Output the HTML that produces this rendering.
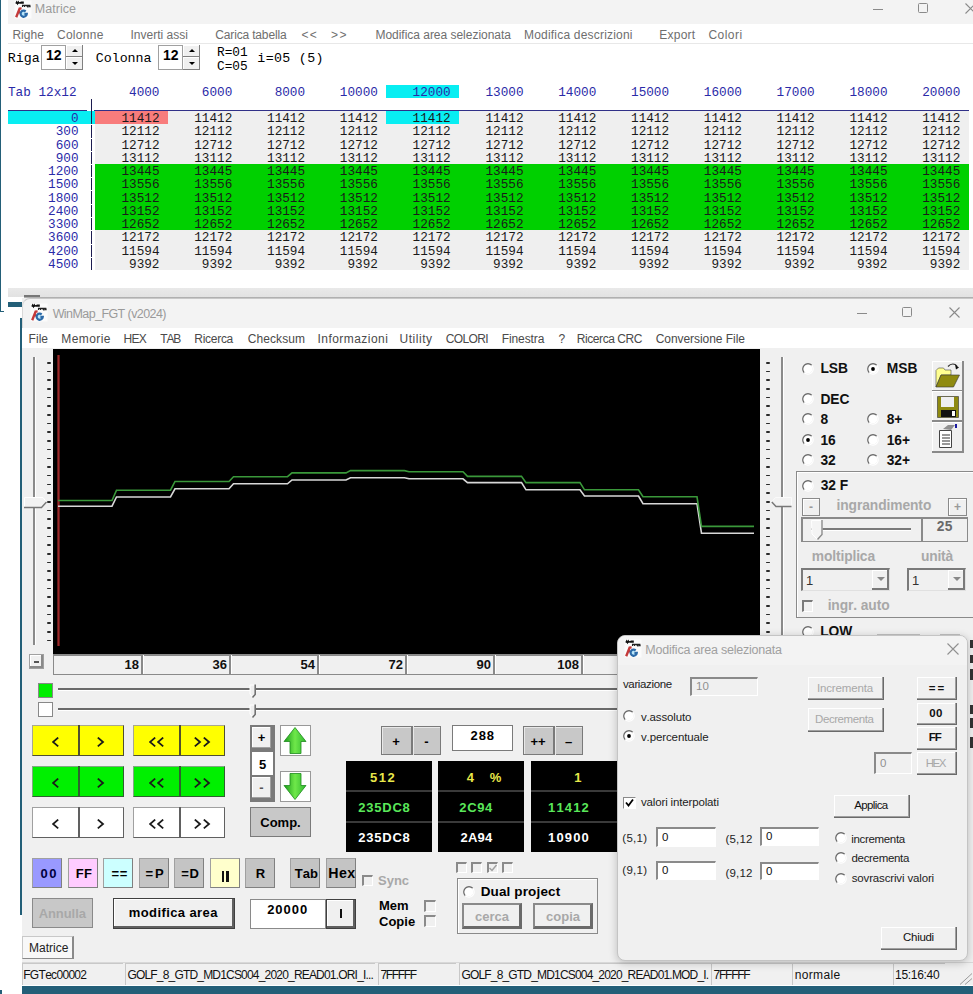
<!DOCTYPE html><html><head><meta charset="utf-8"><style>
html,body{margin:0;padding:0;}
body{width:973px;height:994px;position:relative;overflow:hidden;background:#fff;font-family:"Liberation Sans",sans-serif;}
body div{position:absolute;box-sizing:border-box;}
</style></head><body>
<div style="left:0px;top:0px;width:1px;height:312px;background:#235f78"></div>
<div style="left:0px;top:311px;width:4px;height:1px;background:#235f78"></div>
<div style="left:8px;top:0px;width:965px;height:24px;background:#f3f3f3"></div>
<svg style="position:absolute;left:10px;top:-3.4px" width="22" height="22" viewBox="0 0 22 22">
<rect x="4.5" y="3.5" width="17" height="18" fill="#fbfbfb"/>
<path d="M6 6.6L6.7 5.2L7.5 6.6L8.3 5.2L9 6.6M10.2 5V6.8M11.4 6.8V5.3H13V6.8" stroke="#111" stroke-width="1.6" fill="none"/>
<path d="M12.6 10V8.4H14.6V10M15.2 8.4H17.2V10M17.8 10.6V8.4H19.8L20 9.6H18.6" stroke="#222" stroke-width="1.3" fill="none"/>
<path d="M6.2 20.2L9.6 11.6L11.6 11.4M7.6 15.4H10.2" stroke="#c43a3a" stroke-width="2.4" fill="none"/>
<path d="M15.7 14.3A3.1 3.1 0 1 0 16.8 16.9H14.4" fill="#b8e6fa" stroke="#2c6aa8" stroke-width="2.2"/>
</svg>
<div style="left:34.77px;top:1.07px;font-family:'Liberation Sans', sans-serif;font-size:12.5px;line-height:16px;font-weight:normal;color:#9a9a9a;white-space:pre;font-kerning:none;letter-spacing:0.050px;">Matrice</div>
<div style="left:873px;top:8.5px;width:10px;height:1px;background:#8a8a8a"></div>
<div style="left:918px;top:3.0px;width:10px;height:10px;border:1px solid #8a8a8a;border-radius:1.5px"></div>
<svg style="position:absolute;left:965px;top:3.0px" width="11" height="11"><path d="M0.5 0.5L10.5 10.5M10.5 0.5L0.5 10.5" stroke="#8a8a8a" stroke-width="1.1"/></svg>
<div style="left:8px;top:24px;width:965px;height:20px;background:#fff"></div>
<div style="left:8px;top:43px;width:965px;height:1px;background:#e8e8e8"></div>
<div style="left:12.42px;top:26.54px;font-family:'Liberation Sans', sans-serif;font-size:12px;line-height:16px;font-weight:normal;color:#6e6e6e;white-space:pre;font-kerning:none;letter-spacing:0.041px;">Righe</div>
<div style="left:56.99px;top:26.54px;font-family:'Liberation Sans', sans-serif;font-size:12px;line-height:16px;font-weight:normal;color:#6e6e6e;white-space:pre;font-kerning:none;letter-spacing:0.274px;">Colonne</div>
<div style="left:130.49px;top:26.54px;font-family:'Liberation Sans', sans-serif;font-size:12px;line-height:16px;font-weight:normal;color:#6e6e6e;white-space:pre;font-kerning:none;letter-spacing:0.006px;">Inverti assi</div>
<div style="left:215.29px;top:26.54px;font-family:'Liberation Sans', sans-serif;font-size:12px;line-height:16px;font-weight:normal;color:#6e6e6e;white-space:pre;font-kerning:none;letter-spacing:-0.159px;">Carica tabella</div>
<div style="left:301.41px;top:26.54px;font-family:'Liberation Sans', sans-serif;font-size:12px;line-height:16px;font-weight:normal;color:#6e6e6e;white-space:pre;font-kerning:none;letter-spacing:1.262px;">&lt;&lt;</div>
<div style="left:330.91px;top:26.54px;font-family:'Liberation Sans', sans-serif;font-size:12px;line-height:16px;font-weight:normal;color:#6e6e6e;white-space:pre;font-kerning:none;letter-spacing:1.662px;">&gt;&gt;</div>
<div style="left:375.42px;top:26.54px;font-family:'Liberation Sans', sans-serif;font-size:12px;line-height:16px;font-weight:normal;color:#6e6e6e;white-space:pre;font-kerning:none;letter-spacing:-0.021px;">Modifica area selezionata</div>
<div style="left:524.02px;top:26.54px;font-family:'Liberation Sans', sans-serif;font-size:12px;line-height:16px;font-weight:normal;color:#6e6e6e;white-space:pre;font-kerning:none;letter-spacing:0.199px;">Modifica descrizioni</div>
<div style="left:659.32px;top:26.54px;font-family:'Liberation Sans', sans-serif;font-size:12px;line-height:16px;font-weight:normal;color:#6e6e6e;white-space:pre;font-kerning:none;letter-spacing:0.218px;">Export</div>
<div style="left:708.39px;top:26.54px;font-family:'Liberation Sans', sans-serif;font-size:12px;line-height:16px;font-weight:normal;color:#6e6e6e;white-space:pre;font-kerning:none;letter-spacing:0.495px;">Colori</div>
<div style="left:8px;top:44px;width:965px;height:244px;background:#fff"></div>
<div style="left:7.70px;top:49.96px;font-family:'Liberation Mono', monospace;font-size:13.3px;line-height:17px;font-weight:normal;color:#000;white-space:pre;font-kerning:none;">Riga</div>
<div style="left:41px;top:45px;width:25px;height:25px;background:#fff;border:1px solid #a0a0a0;box-sizing:border-box"></div>
<div style="left:46.00px;top:45.65px;font-family:'Liberation Sans', sans-serif;font-size:14px;line-height:18px;font-weight:bold;color:#000;white-space:pre;font-kerning:none;">12</div>
<div style="left:66px;top:45px;width:17px;height:12px;background:#f0f0f0;box-shadow:inset -1px -1px #808080, inset 1px 1px #fff"></div>
<div style="left:66px;top:57px;width:17px;height:13px;background:#f0f0f0;box-shadow:inset -1px -1px #808080, inset 1px 1px #fff"></div>
<div style="left:72px;top:49px;width:0;height:0;border-left:3px solid transparent;border-right:3px solid transparent;border-bottom:3px solid #000"></div>
<div style="left:72px;top:62px;width:0;height:0;border-left:3px solid transparent;border-right:3px solid transparent;border-top:3px solid #000"></div>
<div style="left:95.70px;top:49.96px;font-family:'Liberation Mono', monospace;font-size:13.3px;line-height:17px;font-weight:normal;color:#000;white-space:pre;font-kerning:none;">Colonna</div>
<div style="left:158px;top:45px;width:25px;height:25px;background:#fff;border:1px solid #a0a0a0;box-sizing:border-box"></div>
<div style="left:163.00px;top:45.65px;font-family:'Liberation Sans', sans-serif;font-size:14px;line-height:18px;font-weight:bold;color:#000;white-space:pre;font-kerning:none;">12</div>
<div style="left:183px;top:45px;width:17px;height:12px;background:#f0f0f0;box-shadow:inset -1px -1px #808080, inset 1px 1px #fff"></div>
<div style="left:183px;top:57px;width:17px;height:13px;background:#f0f0f0;box-shadow:inset -1px -1px #808080, inset 1px 1px #fff"></div>
<div style="left:189px;top:49px;width:0;height:0;border-left:3px solid transparent;border-right:3px solid transparent;border-bottom:3px solid #000"></div>
<div style="left:189px;top:62px;width:0;height:0;border-left:3px solid transparent;border-right:3px solid transparent;border-top:3px solid #000"></div>
<div style="left:217.00px;top:44.09px;font-family:'Liberation Mono', monospace;font-size:12.8px;line-height:17px;font-weight:normal;color:#000;white-space:pre;font-kerning:none;">R=01</div>
<div style="left:217.00px;top:57.59px;font-family:'Liberation Mono', monospace;font-size:12.8px;line-height:17px;font-weight:normal;color:#000;white-space:pre;font-kerning:none;">C=05</div>
<div style="left:257.37px;top:50.46px;font-family:'Liberation Mono', monospace;font-size:13.3px;line-height:17px;font-weight:normal;color:#000;white-space:pre;font-kerning:none;letter-spacing:0.316px;">i=05 (5)</div>
<div style="left:8.00px;top:83.92px;font-family:'Liberation Mono', monospace;font-size:12.7px;line-height:17px;font-weight:normal;color:#2a2aa8;white-space:pre;font-kerning:none;">Tab 12x12</div>
<div style="left:386px;top:85px;width:73px;height:13px;background:#08eef2"></div>
<div style="left:89.50px;top:83.92px;width:70px;text-align:right;font-family:'Liberation Mono', monospace;font-size:12.7px;line-height:17px;font-weight:normal;color:#2a2aa8;white-space:pre;font-kerning:none;">4000</div>
<div style="left:162.30px;top:83.92px;width:70px;text-align:right;font-family:'Liberation Mono', monospace;font-size:12.7px;line-height:17px;font-weight:normal;color:#2a2aa8;white-space:pre;font-kerning:none;">6000</div>
<div style="left:235.10px;top:83.92px;width:70px;text-align:right;font-family:'Liberation Mono', monospace;font-size:12.7px;line-height:17px;font-weight:normal;color:#2a2aa8;white-space:pre;font-kerning:none;">8000</div>
<div style="left:307.90px;top:83.92px;width:70px;text-align:right;font-family:'Liberation Mono', monospace;font-size:12.7px;line-height:17px;font-weight:normal;color:#2a2aa8;white-space:pre;font-kerning:none;">10000</div>
<div style="left:380.70px;top:83.92px;width:70px;text-align:right;font-family:'Liberation Mono', monospace;font-size:12.7px;line-height:17px;font-weight:normal;color:#2a2aa8;white-space:pre;font-kerning:none;">12000</div>
<div style="left:453.50px;top:83.92px;width:70px;text-align:right;font-family:'Liberation Mono', monospace;font-size:12.7px;line-height:17px;font-weight:normal;color:#2a2aa8;white-space:pre;font-kerning:none;">13000</div>
<div style="left:526.30px;top:83.92px;width:70px;text-align:right;font-family:'Liberation Mono', monospace;font-size:12.7px;line-height:17px;font-weight:normal;color:#2a2aa8;white-space:pre;font-kerning:none;">14000</div>
<div style="left:599.10px;top:83.92px;width:70px;text-align:right;font-family:'Liberation Mono', monospace;font-size:12.7px;line-height:17px;font-weight:normal;color:#2a2aa8;white-space:pre;font-kerning:none;">15000</div>
<div style="left:671.90px;top:83.92px;width:70px;text-align:right;font-family:'Liberation Mono', monospace;font-size:12.7px;line-height:17px;font-weight:normal;color:#2a2aa8;white-space:pre;font-kerning:none;">16000</div>
<div style="left:744.70px;top:83.92px;width:70px;text-align:right;font-family:'Liberation Mono', monospace;font-size:12.7px;line-height:17px;font-weight:normal;color:#2a2aa8;white-space:pre;font-kerning:none;">17000</div>
<div style="left:817.50px;top:83.92px;width:70px;text-align:right;font-family:'Liberation Mono', monospace;font-size:12.7px;line-height:17px;font-weight:normal;color:#2a2aa8;white-space:pre;font-kerning:none;">18000</div>
<div style="left:890.30px;top:83.92px;width:70px;text-align:right;font-family:'Liberation Mono', monospace;font-size:12.7px;line-height:17px;font-weight:normal;color:#2a2aa8;white-space:pre;font-kerning:none;">20000</div>
<div style="left:8px;top:110px;width:79px;height:1px;background:#303088"></div>
<div style="left:94px;top:110px;width:875px;height:1px;background:#303088"></div>
<div style="left:95px;top:111px;width:874px;height:159px;background:#efefef"></div>
<div style="left:8px;top:111px;width:87px;height:13px;background:#08eef2"></div>
<div style="left:95px;top:111px;width:73px;height:13px;background:#f87c7c"></div>
<div style="left:386px;top:111px;width:73px;height:13px;background:#08eef2"></div>
<div style="left:95px;top:164px;width:874px;height:66px;background:#00d000"></div>
<div style="left:91px;top:99px;width:1px;height:25px;background:#1c1c50"></div>
<div style="left:91px;top:125px;width:1px;height:13px;background:#1c1c50"></div>
<div style="left:91px;top:139px;width:1px;height:12px;background:#1c1c50"></div>
<div style="left:91px;top:152px;width:1px;height:12px;background:#1c1c50"></div>
<div style="left:91px;top:165px;width:1px;height:12px;background:#1c1c50"></div>
<div style="left:91px;top:178px;width:1px;height:12px;background:#1c1c50"></div>
<div style="left:91px;top:191px;width:1px;height:13px;background:#1c1c50"></div>
<div style="left:91px;top:205px;width:1px;height:12px;background:#1c1c50"></div>
<div style="left:91px;top:218px;width:1px;height:12px;background:#1c1c50"></div>
<div style="left:91px;top:231px;width:1px;height:13px;background:#1c1c50"></div>
<div style="left:91px;top:245px;width:1px;height:12px;background:#1c1c50"></div>
<div style="left:91px;top:258px;width:1px;height:12px;background:#1c1c50"></div>
<div style="left:8.50px;top:110.02px;width:70px;text-align:right;font-family:'Liberation Mono', monospace;font-size:12.7px;line-height:17px;font-weight:normal;color:#2a2aa8;white-space:pre;font-kerning:none;">0</div>
<div style="left:89.50px;top:110.02px;width:70px;text-align:right;font-family:'Liberation Mono', monospace;font-size:12.7px;line-height:17px;font-weight:normal;color:#1a1a1a;white-space:pre;font-kerning:none;">11412</div>
<div style="left:162.30px;top:110.02px;width:70px;text-align:right;font-family:'Liberation Mono', monospace;font-size:12.7px;line-height:17px;font-weight:normal;color:#1a1a1a;white-space:pre;font-kerning:none;">11412</div>
<div style="left:235.10px;top:110.02px;width:70px;text-align:right;font-family:'Liberation Mono', monospace;font-size:12.7px;line-height:17px;font-weight:normal;color:#1a1a1a;white-space:pre;font-kerning:none;">11412</div>
<div style="left:307.90px;top:110.02px;width:70px;text-align:right;font-family:'Liberation Mono', monospace;font-size:12.7px;line-height:17px;font-weight:normal;color:#1a1a1a;white-space:pre;font-kerning:none;">11412</div>
<div style="left:380.70px;top:110.02px;width:70px;text-align:right;font-family:'Liberation Mono', monospace;font-size:12.7px;line-height:17px;font-weight:normal;color:#1a1a1a;white-space:pre;font-kerning:none;">11412</div>
<div style="left:453.50px;top:110.02px;width:70px;text-align:right;font-family:'Liberation Mono', monospace;font-size:12.7px;line-height:17px;font-weight:normal;color:#1a1a1a;white-space:pre;font-kerning:none;">11412</div>
<div style="left:526.30px;top:110.02px;width:70px;text-align:right;font-family:'Liberation Mono', monospace;font-size:12.7px;line-height:17px;font-weight:normal;color:#1a1a1a;white-space:pre;font-kerning:none;">11412</div>
<div style="left:599.10px;top:110.02px;width:70px;text-align:right;font-family:'Liberation Mono', monospace;font-size:12.7px;line-height:17px;font-weight:normal;color:#1a1a1a;white-space:pre;font-kerning:none;">11412</div>
<div style="left:671.90px;top:110.02px;width:70px;text-align:right;font-family:'Liberation Mono', monospace;font-size:12.7px;line-height:17px;font-weight:normal;color:#1a1a1a;white-space:pre;font-kerning:none;">11412</div>
<div style="left:744.70px;top:110.02px;width:70px;text-align:right;font-family:'Liberation Mono', monospace;font-size:12.7px;line-height:17px;font-weight:normal;color:#1a1a1a;white-space:pre;font-kerning:none;">11412</div>
<div style="left:817.50px;top:110.02px;width:70px;text-align:right;font-family:'Liberation Mono', monospace;font-size:12.7px;line-height:17px;font-weight:normal;color:#1a1a1a;white-space:pre;font-kerning:none;">11412</div>
<div style="left:890.30px;top:110.02px;width:70px;text-align:right;font-family:'Liberation Mono', monospace;font-size:12.7px;line-height:17px;font-weight:normal;color:#1a1a1a;white-space:pre;font-kerning:none;">11412</div>
<div style="left:8.50px;top:123.27px;width:70px;text-align:right;font-family:'Liberation Mono', monospace;font-size:12.7px;line-height:17px;font-weight:normal;color:#2a2aa8;white-space:pre;font-kerning:none;">300</div>
<div style="left:89.50px;top:123.27px;width:70px;text-align:right;font-family:'Liberation Mono', monospace;font-size:12.7px;line-height:17px;font-weight:normal;color:#1a1a1a;white-space:pre;font-kerning:none;">12112</div>
<div style="left:162.30px;top:123.27px;width:70px;text-align:right;font-family:'Liberation Mono', monospace;font-size:12.7px;line-height:17px;font-weight:normal;color:#1a1a1a;white-space:pre;font-kerning:none;">12112</div>
<div style="left:235.10px;top:123.27px;width:70px;text-align:right;font-family:'Liberation Mono', monospace;font-size:12.7px;line-height:17px;font-weight:normal;color:#1a1a1a;white-space:pre;font-kerning:none;">12112</div>
<div style="left:307.90px;top:123.27px;width:70px;text-align:right;font-family:'Liberation Mono', monospace;font-size:12.7px;line-height:17px;font-weight:normal;color:#1a1a1a;white-space:pre;font-kerning:none;">12112</div>
<div style="left:380.70px;top:123.27px;width:70px;text-align:right;font-family:'Liberation Mono', monospace;font-size:12.7px;line-height:17px;font-weight:normal;color:#1a1a1a;white-space:pre;font-kerning:none;">12112</div>
<div style="left:453.50px;top:123.27px;width:70px;text-align:right;font-family:'Liberation Mono', monospace;font-size:12.7px;line-height:17px;font-weight:normal;color:#1a1a1a;white-space:pre;font-kerning:none;">12112</div>
<div style="left:526.30px;top:123.27px;width:70px;text-align:right;font-family:'Liberation Mono', monospace;font-size:12.7px;line-height:17px;font-weight:normal;color:#1a1a1a;white-space:pre;font-kerning:none;">12112</div>
<div style="left:599.10px;top:123.27px;width:70px;text-align:right;font-family:'Liberation Mono', monospace;font-size:12.7px;line-height:17px;font-weight:normal;color:#1a1a1a;white-space:pre;font-kerning:none;">12112</div>
<div style="left:671.90px;top:123.27px;width:70px;text-align:right;font-family:'Liberation Mono', monospace;font-size:12.7px;line-height:17px;font-weight:normal;color:#1a1a1a;white-space:pre;font-kerning:none;">12112</div>
<div style="left:744.70px;top:123.27px;width:70px;text-align:right;font-family:'Liberation Mono', monospace;font-size:12.7px;line-height:17px;font-weight:normal;color:#1a1a1a;white-space:pre;font-kerning:none;">12112</div>
<div style="left:817.50px;top:123.27px;width:70px;text-align:right;font-family:'Liberation Mono', monospace;font-size:12.7px;line-height:17px;font-weight:normal;color:#1a1a1a;white-space:pre;font-kerning:none;">12112</div>
<div style="left:890.30px;top:123.27px;width:70px;text-align:right;font-family:'Liberation Mono', monospace;font-size:12.7px;line-height:17px;font-weight:normal;color:#1a1a1a;white-space:pre;font-kerning:none;">12112</div>
<div style="left:8.50px;top:136.52px;width:70px;text-align:right;font-family:'Liberation Mono', monospace;font-size:12.7px;line-height:17px;font-weight:normal;color:#2a2aa8;white-space:pre;font-kerning:none;">600</div>
<div style="left:89.50px;top:136.52px;width:70px;text-align:right;font-family:'Liberation Mono', monospace;font-size:12.7px;line-height:17px;font-weight:normal;color:#1a1a1a;white-space:pre;font-kerning:none;">12712</div>
<div style="left:162.30px;top:136.52px;width:70px;text-align:right;font-family:'Liberation Mono', monospace;font-size:12.7px;line-height:17px;font-weight:normal;color:#1a1a1a;white-space:pre;font-kerning:none;">12712</div>
<div style="left:235.10px;top:136.52px;width:70px;text-align:right;font-family:'Liberation Mono', monospace;font-size:12.7px;line-height:17px;font-weight:normal;color:#1a1a1a;white-space:pre;font-kerning:none;">12712</div>
<div style="left:307.90px;top:136.52px;width:70px;text-align:right;font-family:'Liberation Mono', monospace;font-size:12.7px;line-height:17px;font-weight:normal;color:#1a1a1a;white-space:pre;font-kerning:none;">12712</div>
<div style="left:380.70px;top:136.52px;width:70px;text-align:right;font-family:'Liberation Mono', monospace;font-size:12.7px;line-height:17px;font-weight:normal;color:#1a1a1a;white-space:pre;font-kerning:none;">12712</div>
<div style="left:453.50px;top:136.52px;width:70px;text-align:right;font-family:'Liberation Mono', monospace;font-size:12.7px;line-height:17px;font-weight:normal;color:#1a1a1a;white-space:pre;font-kerning:none;">12712</div>
<div style="left:526.30px;top:136.52px;width:70px;text-align:right;font-family:'Liberation Mono', monospace;font-size:12.7px;line-height:17px;font-weight:normal;color:#1a1a1a;white-space:pre;font-kerning:none;">12712</div>
<div style="left:599.10px;top:136.52px;width:70px;text-align:right;font-family:'Liberation Mono', monospace;font-size:12.7px;line-height:17px;font-weight:normal;color:#1a1a1a;white-space:pre;font-kerning:none;">12712</div>
<div style="left:671.90px;top:136.52px;width:70px;text-align:right;font-family:'Liberation Mono', monospace;font-size:12.7px;line-height:17px;font-weight:normal;color:#1a1a1a;white-space:pre;font-kerning:none;">12712</div>
<div style="left:744.70px;top:136.52px;width:70px;text-align:right;font-family:'Liberation Mono', monospace;font-size:12.7px;line-height:17px;font-weight:normal;color:#1a1a1a;white-space:pre;font-kerning:none;">12712</div>
<div style="left:817.50px;top:136.52px;width:70px;text-align:right;font-family:'Liberation Mono', monospace;font-size:12.7px;line-height:17px;font-weight:normal;color:#1a1a1a;white-space:pre;font-kerning:none;">12712</div>
<div style="left:890.30px;top:136.52px;width:70px;text-align:right;font-family:'Liberation Mono', monospace;font-size:12.7px;line-height:17px;font-weight:normal;color:#1a1a1a;white-space:pre;font-kerning:none;">12712</div>
<div style="left:8.50px;top:149.77px;width:70px;text-align:right;font-family:'Liberation Mono', monospace;font-size:12.7px;line-height:17px;font-weight:normal;color:#2a2aa8;white-space:pre;font-kerning:none;">900</div>
<div style="left:89.50px;top:149.77px;width:70px;text-align:right;font-family:'Liberation Mono', monospace;font-size:12.7px;line-height:17px;font-weight:normal;color:#1a1a1a;white-space:pre;font-kerning:none;">13112</div>
<div style="left:162.30px;top:149.77px;width:70px;text-align:right;font-family:'Liberation Mono', monospace;font-size:12.7px;line-height:17px;font-weight:normal;color:#1a1a1a;white-space:pre;font-kerning:none;">13112</div>
<div style="left:235.10px;top:149.77px;width:70px;text-align:right;font-family:'Liberation Mono', monospace;font-size:12.7px;line-height:17px;font-weight:normal;color:#1a1a1a;white-space:pre;font-kerning:none;">13112</div>
<div style="left:307.90px;top:149.77px;width:70px;text-align:right;font-family:'Liberation Mono', monospace;font-size:12.7px;line-height:17px;font-weight:normal;color:#1a1a1a;white-space:pre;font-kerning:none;">13112</div>
<div style="left:380.70px;top:149.77px;width:70px;text-align:right;font-family:'Liberation Mono', monospace;font-size:12.7px;line-height:17px;font-weight:normal;color:#1a1a1a;white-space:pre;font-kerning:none;">13112</div>
<div style="left:453.50px;top:149.77px;width:70px;text-align:right;font-family:'Liberation Mono', monospace;font-size:12.7px;line-height:17px;font-weight:normal;color:#1a1a1a;white-space:pre;font-kerning:none;">13112</div>
<div style="left:526.30px;top:149.77px;width:70px;text-align:right;font-family:'Liberation Mono', monospace;font-size:12.7px;line-height:17px;font-weight:normal;color:#1a1a1a;white-space:pre;font-kerning:none;">13112</div>
<div style="left:599.10px;top:149.77px;width:70px;text-align:right;font-family:'Liberation Mono', monospace;font-size:12.7px;line-height:17px;font-weight:normal;color:#1a1a1a;white-space:pre;font-kerning:none;">13112</div>
<div style="left:671.90px;top:149.77px;width:70px;text-align:right;font-family:'Liberation Mono', monospace;font-size:12.7px;line-height:17px;font-weight:normal;color:#1a1a1a;white-space:pre;font-kerning:none;">13112</div>
<div style="left:744.70px;top:149.77px;width:70px;text-align:right;font-family:'Liberation Mono', monospace;font-size:12.7px;line-height:17px;font-weight:normal;color:#1a1a1a;white-space:pre;font-kerning:none;">13112</div>
<div style="left:817.50px;top:149.77px;width:70px;text-align:right;font-family:'Liberation Mono', monospace;font-size:12.7px;line-height:17px;font-weight:normal;color:#1a1a1a;white-space:pre;font-kerning:none;">13112</div>
<div style="left:890.30px;top:149.77px;width:70px;text-align:right;font-family:'Liberation Mono', monospace;font-size:12.7px;line-height:17px;font-weight:normal;color:#1a1a1a;white-space:pre;font-kerning:none;">13112</div>
<div style="left:8.50px;top:163.02px;width:70px;text-align:right;font-family:'Liberation Mono', monospace;font-size:12.7px;line-height:17px;font-weight:normal;color:#2a2aa8;white-space:pre;font-kerning:none;">1200</div>
<div style="left:89.50px;top:163.02px;width:70px;text-align:right;font-family:'Liberation Mono', monospace;font-size:12.7px;line-height:17px;font-weight:normal;color:#1a1a1a;white-space:pre;font-kerning:none;">13445</div>
<div style="left:162.30px;top:163.02px;width:70px;text-align:right;font-family:'Liberation Mono', monospace;font-size:12.7px;line-height:17px;font-weight:normal;color:#1a1a1a;white-space:pre;font-kerning:none;">13445</div>
<div style="left:235.10px;top:163.02px;width:70px;text-align:right;font-family:'Liberation Mono', monospace;font-size:12.7px;line-height:17px;font-weight:normal;color:#1a1a1a;white-space:pre;font-kerning:none;">13445</div>
<div style="left:307.90px;top:163.02px;width:70px;text-align:right;font-family:'Liberation Mono', monospace;font-size:12.7px;line-height:17px;font-weight:normal;color:#1a1a1a;white-space:pre;font-kerning:none;">13445</div>
<div style="left:380.70px;top:163.02px;width:70px;text-align:right;font-family:'Liberation Mono', monospace;font-size:12.7px;line-height:17px;font-weight:normal;color:#1a1a1a;white-space:pre;font-kerning:none;">13445</div>
<div style="left:453.50px;top:163.02px;width:70px;text-align:right;font-family:'Liberation Mono', monospace;font-size:12.7px;line-height:17px;font-weight:normal;color:#1a1a1a;white-space:pre;font-kerning:none;">13445</div>
<div style="left:526.30px;top:163.02px;width:70px;text-align:right;font-family:'Liberation Mono', monospace;font-size:12.7px;line-height:17px;font-weight:normal;color:#1a1a1a;white-space:pre;font-kerning:none;">13445</div>
<div style="left:599.10px;top:163.02px;width:70px;text-align:right;font-family:'Liberation Mono', monospace;font-size:12.7px;line-height:17px;font-weight:normal;color:#1a1a1a;white-space:pre;font-kerning:none;">13445</div>
<div style="left:671.90px;top:163.02px;width:70px;text-align:right;font-family:'Liberation Mono', monospace;font-size:12.7px;line-height:17px;font-weight:normal;color:#1a1a1a;white-space:pre;font-kerning:none;">13445</div>
<div style="left:744.70px;top:163.02px;width:70px;text-align:right;font-family:'Liberation Mono', monospace;font-size:12.7px;line-height:17px;font-weight:normal;color:#1a1a1a;white-space:pre;font-kerning:none;">13445</div>
<div style="left:817.50px;top:163.02px;width:70px;text-align:right;font-family:'Liberation Mono', monospace;font-size:12.7px;line-height:17px;font-weight:normal;color:#1a1a1a;white-space:pre;font-kerning:none;">13445</div>
<div style="left:890.30px;top:163.02px;width:70px;text-align:right;font-family:'Liberation Mono', monospace;font-size:12.7px;line-height:17px;font-weight:normal;color:#1a1a1a;white-space:pre;font-kerning:none;">13445</div>
<div style="left:8.50px;top:176.27px;width:70px;text-align:right;font-family:'Liberation Mono', monospace;font-size:12.7px;line-height:17px;font-weight:normal;color:#2a2aa8;white-space:pre;font-kerning:none;">1500</div>
<div style="left:89.50px;top:176.27px;width:70px;text-align:right;font-family:'Liberation Mono', monospace;font-size:12.7px;line-height:17px;font-weight:normal;color:#1a1a1a;white-space:pre;font-kerning:none;">13556</div>
<div style="left:162.30px;top:176.27px;width:70px;text-align:right;font-family:'Liberation Mono', monospace;font-size:12.7px;line-height:17px;font-weight:normal;color:#1a1a1a;white-space:pre;font-kerning:none;">13556</div>
<div style="left:235.10px;top:176.27px;width:70px;text-align:right;font-family:'Liberation Mono', monospace;font-size:12.7px;line-height:17px;font-weight:normal;color:#1a1a1a;white-space:pre;font-kerning:none;">13556</div>
<div style="left:307.90px;top:176.27px;width:70px;text-align:right;font-family:'Liberation Mono', monospace;font-size:12.7px;line-height:17px;font-weight:normal;color:#1a1a1a;white-space:pre;font-kerning:none;">13556</div>
<div style="left:380.70px;top:176.27px;width:70px;text-align:right;font-family:'Liberation Mono', monospace;font-size:12.7px;line-height:17px;font-weight:normal;color:#1a1a1a;white-space:pre;font-kerning:none;">13556</div>
<div style="left:453.50px;top:176.27px;width:70px;text-align:right;font-family:'Liberation Mono', monospace;font-size:12.7px;line-height:17px;font-weight:normal;color:#1a1a1a;white-space:pre;font-kerning:none;">13556</div>
<div style="left:526.30px;top:176.27px;width:70px;text-align:right;font-family:'Liberation Mono', monospace;font-size:12.7px;line-height:17px;font-weight:normal;color:#1a1a1a;white-space:pre;font-kerning:none;">13556</div>
<div style="left:599.10px;top:176.27px;width:70px;text-align:right;font-family:'Liberation Mono', monospace;font-size:12.7px;line-height:17px;font-weight:normal;color:#1a1a1a;white-space:pre;font-kerning:none;">13556</div>
<div style="left:671.90px;top:176.27px;width:70px;text-align:right;font-family:'Liberation Mono', monospace;font-size:12.7px;line-height:17px;font-weight:normal;color:#1a1a1a;white-space:pre;font-kerning:none;">13556</div>
<div style="left:744.70px;top:176.27px;width:70px;text-align:right;font-family:'Liberation Mono', monospace;font-size:12.7px;line-height:17px;font-weight:normal;color:#1a1a1a;white-space:pre;font-kerning:none;">13556</div>
<div style="left:817.50px;top:176.27px;width:70px;text-align:right;font-family:'Liberation Mono', monospace;font-size:12.7px;line-height:17px;font-weight:normal;color:#1a1a1a;white-space:pre;font-kerning:none;">13556</div>
<div style="left:890.30px;top:176.27px;width:70px;text-align:right;font-family:'Liberation Mono', monospace;font-size:12.7px;line-height:17px;font-weight:normal;color:#1a1a1a;white-space:pre;font-kerning:none;">13556</div>
<div style="left:8.50px;top:189.52px;width:70px;text-align:right;font-family:'Liberation Mono', monospace;font-size:12.7px;line-height:17px;font-weight:normal;color:#2a2aa8;white-space:pre;font-kerning:none;">1800</div>
<div style="left:89.50px;top:189.52px;width:70px;text-align:right;font-family:'Liberation Mono', monospace;font-size:12.7px;line-height:17px;font-weight:normal;color:#1a1a1a;white-space:pre;font-kerning:none;">13512</div>
<div style="left:162.30px;top:189.52px;width:70px;text-align:right;font-family:'Liberation Mono', monospace;font-size:12.7px;line-height:17px;font-weight:normal;color:#1a1a1a;white-space:pre;font-kerning:none;">13512</div>
<div style="left:235.10px;top:189.52px;width:70px;text-align:right;font-family:'Liberation Mono', monospace;font-size:12.7px;line-height:17px;font-weight:normal;color:#1a1a1a;white-space:pre;font-kerning:none;">13512</div>
<div style="left:307.90px;top:189.52px;width:70px;text-align:right;font-family:'Liberation Mono', monospace;font-size:12.7px;line-height:17px;font-weight:normal;color:#1a1a1a;white-space:pre;font-kerning:none;">13512</div>
<div style="left:380.70px;top:189.52px;width:70px;text-align:right;font-family:'Liberation Mono', monospace;font-size:12.7px;line-height:17px;font-weight:normal;color:#1a1a1a;white-space:pre;font-kerning:none;">13512</div>
<div style="left:453.50px;top:189.52px;width:70px;text-align:right;font-family:'Liberation Mono', monospace;font-size:12.7px;line-height:17px;font-weight:normal;color:#1a1a1a;white-space:pre;font-kerning:none;">13512</div>
<div style="left:526.30px;top:189.52px;width:70px;text-align:right;font-family:'Liberation Mono', monospace;font-size:12.7px;line-height:17px;font-weight:normal;color:#1a1a1a;white-space:pre;font-kerning:none;">13512</div>
<div style="left:599.10px;top:189.52px;width:70px;text-align:right;font-family:'Liberation Mono', monospace;font-size:12.7px;line-height:17px;font-weight:normal;color:#1a1a1a;white-space:pre;font-kerning:none;">13512</div>
<div style="left:671.90px;top:189.52px;width:70px;text-align:right;font-family:'Liberation Mono', monospace;font-size:12.7px;line-height:17px;font-weight:normal;color:#1a1a1a;white-space:pre;font-kerning:none;">13512</div>
<div style="left:744.70px;top:189.52px;width:70px;text-align:right;font-family:'Liberation Mono', monospace;font-size:12.7px;line-height:17px;font-weight:normal;color:#1a1a1a;white-space:pre;font-kerning:none;">13512</div>
<div style="left:817.50px;top:189.52px;width:70px;text-align:right;font-family:'Liberation Mono', monospace;font-size:12.7px;line-height:17px;font-weight:normal;color:#1a1a1a;white-space:pre;font-kerning:none;">13512</div>
<div style="left:890.30px;top:189.52px;width:70px;text-align:right;font-family:'Liberation Mono', monospace;font-size:12.7px;line-height:17px;font-weight:normal;color:#1a1a1a;white-space:pre;font-kerning:none;">13512</div>
<div style="left:8.50px;top:202.77px;width:70px;text-align:right;font-family:'Liberation Mono', monospace;font-size:12.7px;line-height:17px;font-weight:normal;color:#2a2aa8;white-space:pre;font-kerning:none;">2400</div>
<div style="left:89.50px;top:202.77px;width:70px;text-align:right;font-family:'Liberation Mono', monospace;font-size:12.7px;line-height:17px;font-weight:normal;color:#1a1a1a;white-space:pre;font-kerning:none;">13152</div>
<div style="left:162.30px;top:202.77px;width:70px;text-align:right;font-family:'Liberation Mono', monospace;font-size:12.7px;line-height:17px;font-weight:normal;color:#1a1a1a;white-space:pre;font-kerning:none;">13152</div>
<div style="left:235.10px;top:202.77px;width:70px;text-align:right;font-family:'Liberation Mono', monospace;font-size:12.7px;line-height:17px;font-weight:normal;color:#1a1a1a;white-space:pre;font-kerning:none;">13152</div>
<div style="left:307.90px;top:202.77px;width:70px;text-align:right;font-family:'Liberation Mono', monospace;font-size:12.7px;line-height:17px;font-weight:normal;color:#1a1a1a;white-space:pre;font-kerning:none;">13152</div>
<div style="left:380.70px;top:202.77px;width:70px;text-align:right;font-family:'Liberation Mono', monospace;font-size:12.7px;line-height:17px;font-weight:normal;color:#1a1a1a;white-space:pre;font-kerning:none;">13152</div>
<div style="left:453.50px;top:202.77px;width:70px;text-align:right;font-family:'Liberation Mono', monospace;font-size:12.7px;line-height:17px;font-weight:normal;color:#1a1a1a;white-space:pre;font-kerning:none;">13152</div>
<div style="left:526.30px;top:202.77px;width:70px;text-align:right;font-family:'Liberation Mono', monospace;font-size:12.7px;line-height:17px;font-weight:normal;color:#1a1a1a;white-space:pre;font-kerning:none;">13152</div>
<div style="left:599.10px;top:202.77px;width:70px;text-align:right;font-family:'Liberation Mono', monospace;font-size:12.7px;line-height:17px;font-weight:normal;color:#1a1a1a;white-space:pre;font-kerning:none;">13152</div>
<div style="left:671.90px;top:202.77px;width:70px;text-align:right;font-family:'Liberation Mono', monospace;font-size:12.7px;line-height:17px;font-weight:normal;color:#1a1a1a;white-space:pre;font-kerning:none;">13152</div>
<div style="left:744.70px;top:202.77px;width:70px;text-align:right;font-family:'Liberation Mono', monospace;font-size:12.7px;line-height:17px;font-weight:normal;color:#1a1a1a;white-space:pre;font-kerning:none;">13152</div>
<div style="left:817.50px;top:202.77px;width:70px;text-align:right;font-family:'Liberation Mono', monospace;font-size:12.7px;line-height:17px;font-weight:normal;color:#1a1a1a;white-space:pre;font-kerning:none;">13152</div>
<div style="left:890.30px;top:202.77px;width:70px;text-align:right;font-family:'Liberation Mono', monospace;font-size:12.7px;line-height:17px;font-weight:normal;color:#1a1a1a;white-space:pre;font-kerning:none;">13152</div>
<div style="left:8.50px;top:216.02px;width:70px;text-align:right;font-family:'Liberation Mono', monospace;font-size:12.7px;line-height:17px;font-weight:normal;color:#2a2aa8;white-space:pre;font-kerning:none;">3300</div>
<div style="left:89.50px;top:216.02px;width:70px;text-align:right;font-family:'Liberation Mono', monospace;font-size:12.7px;line-height:17px;font-weight:normal;color:#1a1a1a;white-space:pre;font-kerning:none;">12652</div>
<div style="left:162.30px;top:216.02px;width:70px;text-align:right;font-family:'Liberation Mono', monospace;font-size:12.7px;line-height:17px;font-weight:normal;color:#1a1a1a;white-space:pre;font-kerning:none;">12652</div>
<div style="left:235.10px;top:216.02px;width:70px;text-align:right;font-family:'Liberation Mono', monospace;font-size:12.7px;line-height:17px;font-weight:normal;color:#1a1a1a;white-space:pre;font-kerning:none;">12652</div>
<div style="left:307.90px;top:216.02px;width:70px;text-align:right;font-family:'Liberation Mono', monospace;font-size:12.7px;line-height:17px;font-weight:normal;color:#1a1a1a;white-space:pre;font-kerning:none;">12652</div>
<div style="left:380.70px;top:216.02px;width:70px;text-align:right;font-family:'Liberation Mono', monospace;font-size:12.7px;line-height:17px;font-weight:normal;color:#1a1a1a;white-space:pre;font-kerning:none;">12652</div>
<div style="left:453.50px;top:216.02px;width:70px;text-align:right;font-family:'Liberation Mono', monospace;font-size:12.7px;line-height:17px;font-weight:normal;color:#1a1a1a;white-space:pre;font-kerning:none;">12652</div>
<div style="left:526.30px;top:216.02px;width:70px;text-align:right;font-family:'Liberation Mono', monospace;font-size:12.7px;line-height:17px;font-weight:normal;color:#1a1a1a;white-space:pre;font-kerning:none;">12652</div>
<div style="left:599.10px;top:216.02px;width:70px;text-align:right;font-family:'Liberation Mono', monospace;font-size:12.7px;line-height:17px;font-weight:normal;color:#1a1a1a;white-space:pre;font-kerning:none;">12652</div>
<div style="left:671.90px;top:216.02px;width:70px;text-align:right;font-family:'Liberation Mono', monospace;font-size:12.7px;line-height:17px;font-weight:normal;color:#1a1a1a;white-space:pre;font-kerning:none;">12652</div>
<div style="left:744.70px;top:216.02px;width:70px;text-align:right;font-family:'Liberation Mono', monospace;font-size:12.7px;line-height:17px;font-weight:normal;color:#1a1a1a;white-space:pre;font-kerning:none;">12652</div>
<div style="left:817.50px;top:216.02px;width:70px;text-align:right;font-family:'Liberation Mono', monospace;font-size:12.7px;line-height:17px;font-weight:normal;color:#1a1a1a;white-space:pre;font-kerning:none;">12652</div>
<div style="left:890.30px;top:216.02px;width:70px;text-align:right;font-family:'Liberation Mono', monospace;font-size:12.7px;line-height:17px;font-weight:normal;color:#1a1a1a;white-space:pre;font-kerning:none;">12652</div>
<div style="left:8.50px;top:229.27px;width:70px;text-align:right;font-family:'Liberation Mono', monospace;font-size:12.7px;line-height:17px;font-weight:normal;color:#2a2aa8;white-space:pre;font-kerning:none;">3600</div>
<div style="left:89.50px;top:229.27px;width:70px;text-align:right;font-family:'Liberation Mono', monospace;font-size:12.7px;line-height:17px;font-weight:normal;color:#1a1a1a;white-space:pre;font-kerning:none;">12172</div>
<div style="left:162.30px;top:229.27px;width:70px;text-align:right;font-family:'Liberation Mono', monospace;font-size:12.7px;line-height:17px;font-weight:normal;color:#1a1a1a;white-space:pre;font-kerning:none;">12172</div>
<div style="left:235.10px;top:229.27px;width:70px;text-align:right;font-family:'Liberation Mono', monospace;font-size:12.7px;line-height:17px;font-weight:normal;color:#1a1a1a;white-space:pre;font-kerning:none;">12172</div>
<div style="left:307.90px;top:229.27px;width:70px;text-align:right;font-family:'Liberation Mono', monospace;font-size:12.7px;line-height:17px;font-weight:normal;color:#1a1a1a;white-space:pre;font-kerning:none;">12172</div>
<div style="left:380.70px;top:229.27px;width:70px;text-align:right;font-family:'Liberation Mono', monospace;font-size:12.7px;line-height:17px;font-weight:normal;color:#1a1a1a;white-space:pre;font-kerning:none;">12172</div>
<div style="left:453.50px;top:229.27px;width:70px;text-align:right;font-family:'Liberation Mono', monospace;font-size:12.7px;line-height:17px;font-weight:normal;color:#1a1a1a;white-space:pre;font-kerning:none;">12172</div>
<div style="left:526.30px;top:229.27px;width:70px;text-align:right;font-family:'Liberation Mono', monospace;font-size:12.7px;line-height:17px;font-weight:normal;color:#1a1a1a;white-space:pre;font-kerning:none;">12172</div>
<div style="left:599.10px;top:229.27px;width:70px;text-align:right;font-family:'Liberation Mono', monospace;font-size:12.7px;line-height:17px;font-weight:normal;color:#1a1a1a;white-space:pre;font-kerning:none;">12172</div>
<div style="left:671.90px;top:229.27px;width:70px;text-align:right;font-family:'Liberation Mono', monospace;font-size:12.7px;line-height:17px;font-weight:normal;color:#1a1a1a;white-space:pre;font-kerning:none;">12172</div>
<div style="left:744.70px;top:229.27px;width:70px;text-align:right;font-family:'Liberation Mono', monospace;font-size:12.7px;line-height:17px;font-weight:normal;color:#1a1a1a;white-space:pre;font-kerning:none;">12172</div>
<div style="left:817.50px;top:229.27px;width:70px;text-align:right;font-family:'Liberation Mono', monospace;font-size:12.7px;line-height:17px;font-weight:normal;color:#1a1a1a;white-space:pre;font-kerning:none;">12172</div>
<div style="left:890.30px;top:229.27px;width:70px;text-align:right;font-family:'Liberation Mono', monospace;font-size:12.7px;line-height:17px;font-weight:normal;color:#1a1a1a;white-space:pre;font-kerning:none;">12172</div>
<div style="left:8.50px;top:242.52px;width:70px;text-align:right;font-family:'Liberation Mono', monospace;font-size:12.7px;line-height:17px;font-weight:normal;color:#2a2aa8;white-space:pre;font-kerning:none;">4200</div>
<div style="left:89.50px;top:242.52px;width:70px;text-align:right;font-family:'Liberation Mono', monospace;font-size:12.7px;line-height:17px;font-weight:normal;color:#1a1a1a;white-space:pre;font-kerning:none;">11594</div>
<div style="left:162.30px;top:242.52px;width:70px;text-align:right;font-family:'Liberation Mono', monospace;font-size:12.7px;line-height:17px;font-weight:normal;color:#1a1a1a;white-space:pre;font-kerning:none;">11594</div>
<div style="left:235.10px;top:242.52px;width:70px;text-align:right;font-family:'Liberation Mono', monospace;font-size:12.7px;line-height:17px;font-weight:normal;color:#1a1a1a;white-space:pre;font-kerning:none;">11594</div>
<div style="left:307.90px;top:242.52px;width:70px;text-align:right;font-family:'Liberation Mono', monospace;font-size:12.7px;line-height:17px;font-weight:normal;color:#1a1a1a;white-space:pre;font-kerning:none;">11594</div>
<div style="left:380.70px;top:242.52px;width:70px;text-align:right;font-family:'Liberation Mono', monospace;font-size:12.7px;line-height:17px;font-weight:normal;color:#1a1a1a;white-space:pre;font-kerning:none;">11594</div>
<div style="left:453.50px;top:242.52px;width:70px;text-align:right;font-family:'Liberation Mono', monospace;font-size:12.7px;line-height:17px;font-weight:normal;color:#1a1a1a;white-space:pre;font-kerning:none;">11594</div>
<div style="left:526.30px;top:242.52px;width:70px;text-align:right;font-family:'Liberation Mono', monospace;font-size:12.7px;line-height:17px;font-weight:normal;color:#1a1a1a;white-space:pre;font-kerning:none;">11594</div>
<div style="left:599.10px;top:242.52px;width:70px;text-align:right;font-family:'Liberation Mono', monospace;font-size:12.7px;line-height:17px;font-weight:normal;color:#1a1a1a;white-space:pre;font-kerning:none;">11594</div>
<div style="left:671.90px;top:242.52px;width:70px;text-align:right;font-family:'Liberation Mono', monospace;font-size:12.7px;line-height:17px;font-weight:normal;color:#1a1a1a;white-space:pre;font-kerning:none;">11594</div>
<div style="left:744.70px;top:242.52px;width:70px;text-align:right;font-family:'Liberation Mono', monospace;font-size:12.7px;line-height:17px;font-weight:normal;color:#1a1a1a;white-space:pre;font-kerning:none;">11594</div>
<div style="left:817.50px;top:242.52px;width:70px;text-align:right;font-family:'Liberation Mono', monospace;font-size:12.7px;line-height:17px;font-weight:normal;color:#1a1a1a;white-space:pre;font-kerning:none;">11594</div>
<div style="left:890.30px;top:242.52px;width:70px;text-align:right;font-family:'Liberation Mono', monospace;font-size:12.7px;line-height:17px;font-weight:normal;color:#1a1a1a;white-space:pre;font-kerning:none;">11594</div>
<div style="left:8.50px;top:255.77px;width:70px;text-align:right;font-family:'Liberation Mono', monospace;font-size:12.7px;line-height:17px;font-weight:normal;color:#2a2aa8;white-space:pre;font-kerning:none;">4500</div>
<div style="left:89.50px;top:255.77px;width:70px;text-align:right;font-family:'Liberation Mono', monospace;font-size:12.7px;line-height:17px;font-weight:normal;color:#1a1a1a;white-space:pre;font-kerning:none;">9392</div>
<div style="left:162.30px;top:255.77px;width:70px;text-align:right;font-family:'Liberation Mono', monospace;font-size:12.7px;line-height:17px;font-weight:normal;color:#1a1a1a;white-space:pre;font-kerning:none;">9392</div>
<div style="left:235.10px;top:255.77px;width:70px;text-align:right;font-family:'Liberation Mono', monospace;font-size:12.7px;line-height:17px;font-weight:normal;color:#1a1a1a;white-space:pre;font-kerning:none;">9392</div>
<div style="left:307.90px;top:255.77px;width:70px;text-align:right;font-family:'Liberation Mono', monospace;font-size:12.7px;line-height:17px;font-weight:normal;color:#1a1a1a;white-space:pre;font-kerning:none;">9392</div>
<div style="left:380.70px;top:255.77px;width:70px;text-align:right;font-family:'Liberation Mono', monospace;font-size:12.7px;line-height:17px;font-weight:normal;color:#1a1a1a;white-space:pre;font-kerning:none;">9392</div>
<div style="left:453.50px;top:255.77px;width:70px;text-align:right;font-family:'Liberation Mono', monospace;font-size:12.7px;line-height:17px;font-weight:normal;color:#1a1a1a;white-space:pre;font-kerning:none;">9392</div>
<div style="left:526.30px;top:255.77px;width:70px;text-align:right;font-family:'Liberation Mono', monospace;font-size:12.7px;line-height:17px;font-weight:normal;color:#1a1a1a;white-space:pre;font-kerning:none;">9392</div>
<div style="left:599.10px;top:255.77px;width:70px;text-align:right;font-family:'Liberation Mono', monospace;font-size:12.7px;line-height:17px;font-weight:normal;color:#1a1a1a;white-space:pre;font-kerning:none;">9392</div>
<div style="left:671.90px;top:255.77px;width:70px;text-align:right;font-family:'Liberation Mono', monospace;font-size:12.7px;line-height:17px;font-weight:normal;color:#1a1a1a;white-space:pre;font-kerning:none;">9392</div>
<div style="left:744.70px;top:255.77px;width:70px;text-align:right;font-family:'Liberation Mono', monospace;font-size:12.7px;line-height:17px;font-weight:normal;color:#1a1a1a;white-space:pre;font-kerning:none;">9392</div>
<div style="left:817.50px;top:255.77px;width:70px;text-align:right;font-family:'Liberation Mono', monospace;font-size:12.7px;line-height:17px;font-weight:normal;color:#1a1a1a;white-space:pre;font-kerning:none;">9392</div>
<div style="left:890.30px;top:255.77px;width:70px;text-align:right;font-family:'Liberation Mono', monospace;font-size:12.7px;line-height:17px;font-weight:normal;color:#1a1a1a;white-space:pre;font-kerning:none;">9392</div>
<div style="left:8px;top:288px;width:965px;height:9px;background:linear-gradient(#e9e9e9,#e2e2e2)"></div>
<div style="left:8px;top:302px;width:14px;height:5px;background:#235f78"></div>
<div style="left:24px;top:295px;width:16px;height:2px;background:#777"></div>
<div style="left:24px;top:297px;width:949px;height:1px;background:#b0b0b0"></div>
<div style="left:22px;top:298px;width:951px;height:687px;background:#f0f0f0"></div>
<div style="left:22px;top:298px;width:951px;height:30px;background:#f3f3f3;border-top-left-radius:8px;border-top:1px solid #c8c8c8;border-left:1px solid #d8d8d8"></div>
<div style="left:20px;top:318px;width:2px;height:597px;background:#235f78"></div>
<svg style="position:absolute;left:26px;top:300px" width="22" height="22" viewBox="0 0 22 22">
<rect x="4.5" y="3.5" width="17" height="18" fill="#fbfbfb"/>
<path d="M6 6.6L6.7 5.2L7.5 6.6L8.3 5.2L9 6.6M10.2 5V6.8M11.4 6.8V5.3H13V6.8" stroke="#111" stroke-width="1.6" fill="none"/>
<path d="M12.6 10V8.4H14.6V10M15.2 8.4H17.2V10M17.8 10.6V8.4H19.8L20 9.6H18.6" stroke="#222" stroke-width="1.3" fill="none"/>
<path d="M6.2 20.2L9.6 11.6L11.6 11.4M7.6 15.4H10.2" stroke="#c43a3a" stroke-width="2.4" fill="none"/>
<path d="M15.7 14.3A3.1 3.1 0 1 0 16.8 16.9H14.4" fill="#b8e6fa" stroke="#2c6aa8" stroke-width="2.2"/>
</svg>
<div style="left:52.65px;top:305.97px;font-family:'Liberation Sans', sans-serif;font-size:12.5px;line-height:16px;font-weight:normal;color:#9a9a9a;white-space:pre;font-kerning:none;letter-spacing:-0.577px;">WinMap_FGT (v2024)</div>
<div style="left:857px;top:312.5px;width:10px;height:1px;background:#8a8a8a"></div>
<div style="left:902px;top:307.0px;width:10px;height:10px;border:1px solid #8a8a8a;border-radius:1.5px"></div>
<svg style="position:absolute;left:948.5px;top:307.0px" width="11" height="11"><path d="M0.5 0.5L10.5 10.5M10.5 0.5L0.5 10.5" stroke="#8a8a8a" stroke-width="1.1"/></svg>
<div style="left:22px;top:328px;width:951px;height:20px;background:#fff"></div>
<div style="left:28.62px;top:330.54px;font-family:'Liberation Sans', sans-serif;font-size:12px;line-height:16px;font-weight:normal;color:#4a4a4a;white-space:pre;font-kerning:none;letter-spacing:0.027px;">File</div>
<div style="left:61.22px;top:330.54px;font-family:'Liberation Sans', sans-serif;font-size:12px;line-height:16px;font-weight:normal;color:#4a4a4a;white-space:pre;font-kerning:none;letter-spacing:0.440px;">Memorie</div>
<div style="left:123.62px;top:330.54px;font-family:'Liberation Sans', sans-serif;font-size:12px;line-height:16px;font-weight:normal;color:#4a4a4a;white-space:pre;font-kerning:none;letter-spacing:-0.769px;">HEX</div>
<div style="left:160.33px;top:330.54px;font-family:'Liberation Sans', sans-serif;font-size:12px;line-height:16px;font-weight:normal;color:#4a4a4a;white-space:pre;font-kerning:none;letter-spacing:-1.218px;">TAB</div>
<div style="left:194.32px;top:330.54px;font-family:'Liberation Sans', sans-serif;font-size:12px;line-height:16px;font-weight:normal;color:#4a4a4a;white-space:pre;font-kerning:none;letter-spacing:-0.282px;">Ricerca</div>
<div style="left:247.69px;top:330.54px;font-family:'Liberation Sans', sans-serif;font-size:12px;line-height:16px;font-weight:normal;color:#4a4a4a;white-space:pre;font-kerning:none;letter-spacing:0.102px;">Checksum</div>
<div style="left:317.49px;top:330.54px;font-family:'Liberation Sans', sans-serif;font-size:12px;line-height:16px;font-weight:normal;color:#4a4a4a;white-space:pre;font-kerning:none;letter-spacing:0.450px;">Informazioni</div>
<div style="left:399.47px;top:330.54px;font-family:'Liberation Sans', sans-serif;font-size:12px;line-height:16px;font-weight:normal;color:#4a4a4a;white-space:pre;font-kerning:none;letter-spacing:0.536px;">Utility</div>
<div style="left:445.79px;top:330.54px;font-family:'Liberation Sans', sans-serif;font-size:12px;line-height:16px;font-weight:normal;color:#4a4a4a;white-space:pre;font-kerning:none;letter-spacing:-0.638px;">COLORI</div>
<div style="left:501.82px;top:330.54px;font-family:'Liberation Sans', sans-serif;font-size:12px;line-height:16px;font-weight:normal;color:#4a4a4a;white-space:pre;font-kerning:none;letter-spacing:-0.123px;">Finestra</div>
<div style="left:558.50px;top:330.54px;font-family:'Liberation Sans', sans-serif;font-size:12px;line-height:16px;font-weight:normal;color:#4a4a4a;white-space:pre;font-kerning:none;">?</div>
<div style="left:576.82px;top:330.54px;font-family:'Liberation Sans', sans-serif;font-size:12px;line-height:16px;font-weight:normal;color:#4a4a4a;white-space:pre;font-kerning:none;letter-spacing:-0.437px;">Ricerca CRC</div>
<div style="left:655.69px;top:330.54px;font-family:'Liberation Sans', sans-serif;font-size:12px;line-height:16px;font-weight:normal;color:#4a4a4a;white-space:pre;font-kerning:none;letter-spacing:-0.053px;">Conversione File</div>
<div style="left:33px;top:357px;width:2px;height:288px;background:#8a8a8a;box-shadow:1px 0 #fff"></div>
<div style="left:47px;top:362.0px;width:4px;height:1.7px;background:#2a2a2a;border-radius:1px"></div>
<div style="left:766px;top:362.0px;width:4px;height:1.7px;background:#2a2a2a;border-radius:1px"></div>
<div style="left:47px;top:370.7px;width:4px;height:1.7px;background:#2a2a2a;border-radius:1px"></div>
<div style="left:766px;top:370.7px;width:4px;height:1.7px;background:#2a2a2a;border-radius:1px"></div>
<div style="left:47px;top:379.4px;width:4px;height:1.7px;background:#2a2a2a;border-radius:1px"></div>
<div style="left:766px;top:379.4px;width:4px;height:1.7px;background:#2a2a2a;border-radius:1px"></div>
<div style="left:47px;top:388.0px;width:4px;height:1.7px;background:#2a2a2a;border-radius:1px"></div>
<div style="left:766px;top:388.0px;width:4px;height:1.7px;background:#2a2a2a;border-radius:1px"></div>
<div style="left:47px;top:396.7px;width:4px;height:1.7px;background:#2a2a2a;border-radius:1px"></div>
<div style="left:766px;top:396.7px;width:4px;height:1.7px;background:#2a2a2a;border-radius:1px"></div>
<div style="left:47px;top:405.4px;width:4px;height:1.7px;background:#2a2a2a;border-radius:1px"></div>
<div style="left:766px;top:405.4px;width:4px;height:1.7px;background:#2a2a2a;border-radius:1px"></div>
<div style="left:47px;top:414.1px;width:4px;height:1.7px;background:#2a2a2a;border-radius:1px"></div>
<div style="left:766px;top:414.1px;width:4px;height:1.7px;background:#2a2a2a;border-radius:1px"></div>
<div style="left:47px;top:422.8px;width:4px;height:1.7px;background:#2a2a2a;border-radius:1px"></div>
<div style="left:766px;top:422.8px;width:4px;height:1.7px;background:#2a2a2a;border-radius:1px"></div>
<div style="left:47px;top:431.4px;width:4px;height:1.7px;background:#2a2a2a;border-radius:1px"></div>
<div style="left:766px;top:431.4px;width:4px;height:1.7px;background:#2a2a2a;border-radius:1px"></div>
<div style="left:47px;top:440.1px;width:4px;height:1.7px;background:#2a2a2a;border-radius:1px"></div>
<div style="left:766px;top:440.1px;width:4px;height:1.7px;background:#2a2a2a;border-radius:1px"></div>
<div style="left:47px;top:448.8px;width:4px;height:1.7px;background:#2a2a2a;border-radius:1px"></div>
<div style="left:766px;top:448.8px;width:4px;height:1.7px;background:#2a2a2a;border-radius:1px"></div>
<div style="left:47px;top:457.5px;width:4px;height:1.7px;background:#2a2a2a;border-radius:1px"></div>
<div style="left:766px;top:457.5px;width:4px;height:1.7px;background:#2a2a2a;border-radius:1px"></div>
<div style="left:47px;top:466.2px;width:4px;height:1.7px;background:#2a2a2a;border-radius:1px"></div>
<div style="left:766px;top:466.2px;width:4px;height:1.7px;background:#2a2a2a;border-radius:1px"></div>
<div style="left:47px;top:474.8px;width:4px;height:1.7px;background:#2a2a2a;border-radius:1px"></div>
<div style="left:766px;top:474.8px;width:4px;height:1.7px;background:#2a2a2a;border-radius:1px"></div>
<div style="left:47px;top:483.5px;width:4px;height:1.7px;background:#2a2a2a;border-radius:1px"></div>
<div style="left:766px;top:483.5px;width:4px;height:1.7px;background:#2a2a2a;border-radius:1px"></div>
<div style="left:47px;top:492.2px;width:4px;height:1.7px;background:#2a2a2a;border-radius:1px"></div>
<div style="left:766px;top:492.2px;width:4px;height:1.7px;background:#2a2a2a;border-radius:1px"></div>
<div style="left:47px;top:500.9px;width:4px;height:1.7px;background:#2a2a2a;border-radius:1px"></div>
<div style="left:766px;top:500.9px;width:4px;height:1.7px;background:#2a2a2a;border-radius:1px"></div>
<div style="left:47px;top:509.6px;width:4px;height:1.7px;background:#2a2a2a;border-radius:1px"></div>
<div style="left:766px;top:509.6px;width:4px;height:1.7px;background:#2a2a2a;border-radius:1px"></div>
<div style="left:47px;top:518.2px;width:4px;height:1.7px;background:#2a2a2a;border-radius:1px"></div>
<div style="left:766px;top:518.2px;width:4px;height:1.7px;background:#2a2a2a;border-radius:1px"></div>
<div style="left:47px;top:526.9px;width:4px;height:1.7px;background:#2a2a2a;border-radius:1px"></div>
<div style="left:766px;top:526.9px;width:4px;height:1.7px;background:#2a2a2a;border-radius:1px"></div>
<div style="left:47px;top:535.6px;width:4px;height:1.7px;background:#2a2a2a;border-radius:1px"></div>
<div style="left:766px;top:535.6px;width:4px;height:1.7px;background:#2a2a2a;border-radius:1px"></div>
<div style="left:47px;top:544.3px;width:4px;height:1.7px;background:#2a2a2a;border-radius:1px"></div>
<div style="left:766px;top:544.3px;width:4px;height:1.7px;background:#2a2a2a;border-radius:1px"></div>
<div style="left:47px;top:553.0px;width:4px;height:1.7px;background:#2a2a2a;border-radius:1px"></div>
<div style="left:766px;top:553.0px;width:4px;height:1.7px;background:#2a2a2a;border-radius:1px"></div>
<div style="left:47px;top:561.6px;width:4px;height:1.7px;background:#2a2a2a;border-radius:1px"></div>
<div style="left:766px;top:561.6px;width:4px;height:1.7px;background:#2a2a2a;border-radius:1px"></div>
<div style="left:47px;top:570.3px;width:4px;height:1.7px;background:#2a2a2a;border-radius:1px"></div>
<div style="left:766px;top:570.3px;width:4px;height:1.7px;background:#2a2a2a;border-radius:1px"></div>
<div style="left:47px;top:579.0px;width:4px;height:1.7px;background:#2a2a2a;border-radius:1px"></div>
<div style="left:766px;top:579.0px;width:4px;height:1.7px;background:#2a2a2a;border-radius:1px"></div>
<div style="left:47px;top:587.7px;width:4px;height:1.7px;background:#2a2a2a;border-radius:1px"></div>
<div style="left:766px;top:587.7px;width:4px;height:1.7px;background:#2a2a2a;border-radius:1px"></div>
<div style="left:47px;top:596.4px;width:4px;height:1.7px;background:#2a2a2a;border-radius:1px"></div>
<div style="left:766px;top:596.4px;width:4px;height:1.7px;background:#2a2a2a;border-radius:1px"></div>
<div style="left:47px;top:605.0px;width:4px;height:1.7px;background:#2a2a2a;border-radius:1px"></div>
<div style="left:766px;top:605.0px;width:4px;height:1.7px;background:#2a2a2a;border-radius:1px"></div>
<div style="left:47px;top:613.7px;width:4px;height:1.7px;background:#2a2a2a;border-radius:1px"></div>
<div style="left:766px;top:613.7px;width:4px;height:1.7px;background:#2a2a2a;border-radius:1px"></div>
<div style="left:47px;top:622.4px;width:4px;height:1.7px;background:#2a2a2a;border-radius:1px"></div>
<div style="left:766px;top:622.4px;width:4px;height:1.7px;background:#2a2a2a;border-radius:1px"></div>
<div style="left:47px;top:631.1px;width:4px;height:1.7px;background:#2a2a2a;border-radius:1px"></div>
<div style="left:766px;top:631.1px;width:4px;height:1.7px;background:#2a2a2a;border-radius:1px"></div>
<div style="left:47px;top:639.8px;width:4px;height:1.7px;background:#2a2a2a;border-radius:1px"></div>
<div style="left:766px;top:639.8px;width:4px;height:1.7px;background:#2a2a2a;border-radius:1px"></div>
<svg style="position:absolute;left:24px;top:497px" width="24" height="12"><path d="M0.5 0.5H19L22.5 5L18 10.5H0.5Z" fill="#f2f2f2" stroke="#fff"/><path d="M0 10.5H17.5L22.5 5" stroke="#777" stroke-width="1.4" fill="none"/></svg>
<div style="left:781px;top:357px;width:2px;height:288px;background:#8a8a8a;box-shadow:1px 0 #fff"></div>
<svg style="position:absolute;left:771px;top:497px" width="22" height="12"><path d="M4.5 0.5H20.5V9.5H4.5L0.5 5Z" fill="#f2f2f2" stroke="#fafafa"/><path d="M0.8 5L5 9.6H20.5" stroke="#777" stroke-width="1.5" fill="none"/></svg>
<div style="left:53px;top:349px;width:707px;height:305px;background:#000"></div>
<div style="left:57px;top:355px;width:3px;height:291px;background:linear-gradient(90deg,#4a1010,#9a2a2a 50%,#4a1010)"></div>
<svg style="position:absolute;left:0;top:0" width="973" height="994">
<polyline points="58.0,506.2 112.0,506.2 116.5,497 170.5,497 175.0,488.8 229.0,488.8 233.5,483.8 287.5,483.8 292.0,480 346.0,480 350.5,477.8 404.5,477.8 409.0,478.8 463.0,478.8 467.5,482.6 521.5,482.6 526.0,489.8 580.0,489.8 584.5,496 638.5,496 643.0,503.7 697.0,503.7 701.5,533.3 754.0,533.3" fill="none" stroke="#d8d8d8" stroke-width="1.6"/>
<polyline points="58.0,500.5 112.0,500.5 116.5,490.2 170.5,490.2 175.0,481.5 229.0,481.5 233.5,476.7 287.5,476.7 292.0,472.9 346.0,472.9 350.5,470.6 404.5,470.6 409.0,471.7 463.0,471.7 467.5,476.4 521.5,476.4 526.0,482.6 580.0,482.6 584.5,489.8 638.5,489.8 643.0,496.8 697.0,496.8 701.5,526.4 754.0,526.4" fill="none" stroke="#3a983a" stroke-width="1.6"/>
</svg>
<div style="left:53px;top:654px;width:707px;height:21px;background:#f0f0f0;border:1px solid #8a8a8a;border-top:2px solid #8a8a8a"></div>
<div style="left:141px;top:655px;width:2px;height:19px;background:#8a8a8a;box-shadow:1px 0 #fff"></div>
<div style="left:79.00px;top:656.00px;width:60px;text-align:right;font-family:'Liberation Sans', sans-serif;font-size:13px;line-height:17px;font-weight:bold;color:#111;white-space:pre;font-kerning:none;">18</div>
<div style="left:229px;top:655px;width:2px;height:19px;background:#8a8a8a;box-shadow:1px 0 #fff"></div>
<div style="left:167.00px;top:656.00px;width:60px;text-align:right;font-family:'Liberation Sans', sans-serif;font-size:13px;line-height:17px;font-weight:bold;color:#111;white-space:pre;font-kerning:none;">36</div>
<div style="left:317px;top:655px;width:2px;height:19px;background:#8a8a8a;box-shadow:1px 0 #fff"></div>
<div style="left:255.00px;top:656.00px;width:60px;text-align:right;font-family:'Liberation Sans', sans-serif;font-size:13px;line-height:17px;font-weight:bold;color:#111;white-space:pre;font-kerning:none;">54</div>
<div style="left:405px;top:655px;width:2px;height:19px;background:#8a8a8a;box-shadow:1px 0 #fff"></div>
<div style="left:343.00px;top:656.00px;width:60px;text-align:right;font-family:'Liberation Sans', sans-serif;font-size:13px;line-height:17px;font-weight:bold;color:#111;white-space:pre;font-kerning:none;">72</div>
<div style="left:493px;top:655px;width:2px;height:19px;background:#8a8a8a;box-shadow:1px 0 #fff"></div>
<div style="left:431.00px;top:656.00px;width:60px;text-align:right;font-family:'Liberation Sans', sans-serif;font-size:13px;line-height:17px;font-weight:bold;color:#111;white-space:pre;font-kerning:none;">90</div>
<div style="left:581px;top:655px;width:2px;height:19px;background:#8a8a8a;box-shadow:1px 0 #fff"></div>
<div style="left:519.00px;top:656.00px;width:60px;text-align:right;font-family:'Liberation Sans', sans-serif;font-size:13px;line-height:17px;font-weight:bold;color:#111;white-space:pre;font-kerning:none;">108</div>
<div style="left:668px;top:655px;width:2px;height:19px;background:#8a8a8a;box-shadow:1px 0 #fff"></div>
<div style="left:606.00px;top:656.00px;width:60px;text-align:right;font-family:'Liberation Sans', sans-serif;font-size:13px;line-height:17px;font-weight:bold;color:#111;white-space:pre;font-kerning:none;">126</div>
<div style="left:756px;top:655px;width:2px;height:19px;background:#8a8a8a;box-shadow:1px 0 #fff"></div>
<div style="left:694.00px;top:656.00px;width:60px;text-align:right;font-family:'Liberation Sans', sans-serif;font-size:13px;line-height:17px;font-weight:bold;color:#111;white-space:pre;font-kerning:none;">144</div>
<div style="left:29px;top:654px;width:15px;height:15px;background:#f0f0f0;box-shadow:inset -2px -2px #8a8a8a, inset 1px 1px #fff;border:1px solid #a0a0a0"></div>
<div style="left:34px;top:661px;width:5px;height:2px;background:#555"></div>
<div style="left:38px;top:683px;width:15px;height:15px;background:#00ee00;border:1px solid #888"></div>
<div style="left:38px;top:702px;width:15px;height:15px;background:#fff;border:1px solid #888"></div>
<div style="left:58px;top:688px;width:560px;height:2px;background:#6a6a6a;box-shadow:0 1px #fff"></div>
<div style="left:58px;top:708px;width:560px;height:2px;background:#6a6a6a;box-shadow:0 1px #fff"></div>
<svg style="position:absolute;left:249px;top:684px" width="8" height="14"><path d="M1 1V10L4 13.5L6.5 11V1Z" fill="#eee" stroke="#fff"/><path d="M6.2 0.5V10.5L3.5 13.5" stroke="#6a6a6a" stroke-width="1.5" fill="none"/></svg>
<svg style="position:absolute;left:249px;top:704px" width="8" height="14"><path d="M1 1V10L4 13.5L6.5 11V1Z" fill="#eee" stroke="#fff"/><path d="M6.2 0.5V10.5L3.5 13.5" stroke="#6a6a6a" stroke-width="1.5" fill="none"/></svg>
<div style="left:32px;top:725px;width:92px;height:31px;background:#ffff00;border:1px solid #505030;border-top-color:#a8a890;border-left-color:#a8a890"></div>
<div style="left:78px;top:725px;width:2px;height:31px;background:#505030"></div>
<svg style="position:absolute;left:52px;top:737px" width="8" height="11"><path d="M6.2 0.6L1 5L6.2 9.4" stroke="#1a1a1a" stroke-width="1.8" fill="none"/></svg>
<svg style="position:absolute;left:96.5px;top:737px" width="8" height="11"><path d="M0.8 0.6L6 5L0.8 9.4" stroke="#1a1a1a" stroke-width="1.8" fill="none"/></svg>
<div style="left:133px;top:725px;width:92px;height:31px;background:#ffff00;border:1px solid #505030;border-top-color:#a8a890;border-left-color:#a8a890"></div>
<div style="left:179px;top:725px;width:2px;height:31px;background:#505030"></div>
<svg style="position:absolute;left:149px;top:737px" width="8" height="11"><path d="M6.2 0.6L1 5L6.2 9.4" stroke="#1a1a1a" stroke-width="1.8" fill="none"/></svg>
<svg style="position:absolute;left:157px;top:737px" width="8" height="11"><path d="M6.2 0.6L1 5L6.2 9.4" stroke="#1a1a1a" stroke-width="1.8" fill="none"/></svg>
<svg style="position:absolute;left:194px;top:737px" width="8" height="11"><path d="M0.8 0.6L6 5L0.8 9.4" stroke="#1a1a1a" stroke-width="1.8" fill="none"/></svg>
<svg style="position:absolute;left:202.5px;top:737px" width="8" height="11"><path d="M0.8 0.6L6 5L0.8 9.4" stroke="#1a1a1a" stroke-width="1.8" fill="none"/></svg>
<div style="left:32px;top:766px;width:92px;height:31px;background:#00f000;border:1px solid #306030;border-top-color:#80a880;border-left-color:#80a880"></div>
<div style="left:78px;top:766px;width:2px;height:31px;background:#306030"></div>
<svg style="position:absolute;left:52px;top:778px" width="8" height="11"><path d="M6.2 0.6L1 5L6.2 9.4" stroke="#1a1a1a" stroke-width="1.8" fill="none"/></svg>
<svg style="position:absolute;left:96.5px;top:778px" width="8" height="11"><path d="M0.8 0.6L6 5L0.8 9.4" stroke="#1a1a1a" stroke-width="1.8" fill="none"/></svg>
<div style="left:133px;top:766px;width:92px;height:31px;background:#00f000;border:1px solid #306030;border-top-color:#80a880;border-left-color:#80a880"></div>
<div style="left:179px;top:766px;width:2px;height:31px;background:#306030"></div>
<svg style="position:absolute;left:149px;top:778px" width="8" height="11"><path d="M6.2 0.6L1 5L6.2 9.4" stroke="#1a1a1a" stroke-width="1.8" fill="none"/></svg>
<svg style="position:absolute;left:157px;top:778px" width="8" height="11"><path d="M6.2 0.6L1 5L6.2 9.4" stroke="#1a1a1a" stroke-width="1.8" fill="none"/></svg>
<svg style="position:absolute;left:194px;top:778px" width="8" height="11"><path d="M0.8 0.6L6 5L0.8 9.4" stroke="#1a1a1a" stroke-width="1.8" fill="none"/></svg>
<svg style="position:absolute;left:202.5px;top:778px" width="8" height="11"><path d="M0.8 0.6L6 5L0.8 9.4" stroke="#1a1a1a" stroke-width="1.8" fill="none"/></svg>
<div style="left:32px;top:807px;width:92px;height:31px;background:#ffffff;border:1px solid #606060;border-top-color:#a0a0a0;border-left-color:#a0a0a0"></div>
<div style="left:78px;top:807px;width:2px;height:31px;background:#606060"></div>
<svg style="position:absolute;left:52px;top:819px" width="8" height="11"><path d="M6.2 0.6L1 5L6.2 9.4" stroke="#1a1a1a" stroke-width="1.8" fill="none"/></svg>
<svg style="position:absolute;left:96.5px;top:819px" width="8" height="11"><path d="M0.8 0.6L6 5L0.8 9.4" stroke="#1a1a1a" stroke-width="1.8" fill="none"/></svg>
<div style="left:133px;top:807px;width:92px;height:31px;background:#ffffff;border:1px solid #606060;border-top-color:#a0a0a0;border-left-color:#a0a0a0"></div>
<div style="left:179px;top:807px;width:2px;height:31px;background:#606060"></div>
<svg style="position:absolute;left:149px;top:819px" width="8" height="11"><path d="M6.2 0.6L1 5L6.2 9.4" stroke="#1a1a1a" stroke-width="1.8" fill="none"/></svg>
<svg style="position:absolute;left:157px;top:819px" width="8" height="11"><path d="M6.2 0.6L1 5L6.2 9.4" stroke="#1a1a1a" stroke-width="1.8" fill="none"/></svg>
<svg style="position:absolute;left:194px;top:819px" width="8" height="11"><path d="M0.8 0.6L6 5L0.8 9.4" stroke="#1a1a1a" stroke-width="1.8" fill="none"/></svg>
<svg style="position:absolute;left:202.5px;top:819px" width="8" height="11"><path d="M0.8 0.6L6 5L0.8 9.4" stroke="#1a1a1a" stroke-width="1.8" fill="none"/></svg>
<div style="left:250px;top:725px;width:25px;height:77px;background:#7a7a7a"></div>
<div style="left:252px;top:727px;width:19px;height:21px;background:#f0f0f0;box-shadow:inset -1px -1px #a0a0a0, inset 1px 1px #fff"></div>
<div style="left:251.50px;top:729.00px;width:20px;text-align:center;font-family:'Liberation Sans', sans-serif;font-size:13px;line-height:17px;font-weight:bold;color:#000;white-space:pre;font-kerning:none;">+</div>
<div style="left:252px;top:752px;width:21px;height:23px;background:#fff"></div>
<div style="left:252.50px;top:756.00px;width:20px;text-align:center;font-family:'Liberation Sans', sans-serif;font-size:13px;line-height:17px;font-weight:bold;color:#000;white-space:pre;font-kerning:none;">5</div>
<div style="left:252px;top:777px;width:19px;height:21px;background:#f0f0f0;box-shadow:inset -1px -1px #a0a0a0, inset 1px 1px #fff"></div>
<div style="left:251.50px;top:779.00px;width:20px;text-align:center;font-family:'Liberation Sans', sans-serif;font-size:13px;line-height:17px;font-weight:bold;color:#555;white-space:pre;font-kerning:none;">-</div>
<div style="left:280px;top:725px;width:31px;height:31px;background:#fff;border:1px solid #999"></div>
<svg style="position:absolute;left:280px;top:725px" width="31" height="31"><defs><linearGradient id="ga725" x1="0" x2="1"><stop offset="0" stop-color="#1a9a1a"/><stop offset="0.5" stop-color="#6fe84a"/><stop offset="1" stop-color="#2fb82f"/></linearGradient></defs>
<path d="M15 2.5L26 16.5H21V28.5H10V16.5H4Z" fill="url(#ga725)" stroke="#1d8a1d" stroke-width="0.8"/></svg>
<div style="left:280px;top:771px;width:31px;height:31px;background:#fff;border:1px solid #999"></div>
<svg style="position:absolute;left:280px;top:771px" width="31" height="31"><defs><linearGradient id="ga771" x1="0" x2="1"><stop offset="0" stop-color="#1a9a1a"/><stop offset="0.5" stop-color="#6fe84a"/><stop offset="1" stop-color="#2fb82f"/></linearGradient></defs>
<path d="M15 28.5L26 14.5H21V2.5H10V14.5H4Z" fill="url(#ga771)" stroke="#1d8a1d" stroke-width="0.8"/></svg>
<div style="left:250px;top:807px;width:61px;height:30px;background:#c8c8c8;border:1px solid #7a7a7a;"></div>
<div style="left:240.00px;top:813.68px;width:81px;text-align:center;font-family:'Liberation Sans', sans-serif;font-size:13px;line-height:17px;font-weight:bold;color:#000;white-space:pre;font-kerning:none;">Comp.</div>
<div style="left:381px;top:726px;width:60px;height:29px;background:#c8c8c8;border:1px solid #7a7a7a;box-shadow:inset 1px 1px #e8e8e8"></div>
<div style="left:411px;top:726px;width:2px;height:29px;background:#7a7a7a;box-shadow:1px 0 #e8e8e8"></div>
<div style="left:381.00px;top:733.00px;width:30px;text-align:center;font-family:'Liberation Sans', sans-serif;font-size:13px;line-height:17px;font-weight:bold;color:#000;white-space:pre;font-kerning:none;">+</div>
<div style="left:411.50px;top:733.00px;width:30px;text-align:center;font-family:'Liberation Sans', sans-serif;font-size:13px;line-height:17px;font-weight:bold;color:#000;white-space:pre;font-kerning:none;">-</div>
<div style="left:523px;top:726px;width:60px;height:29px;background:#c8c8c8;border:1px solid #7a7a7a;box-shadow:inset 1px 1px #e8e8e8"></div>
<div style="left:553px;top:726px;width:2px;height:29px;background:#7a7a7a;box-shadow:1px 0 #e8e8e8"></div>
<div style="left:523.00px;top:733.00px;width:30px;text-align:center;font-family:'Liberation Sans', sans-serif;font-size:13px;line-height:17px;font-weight:bold;color:#000;white-space:pre;font-kerning:none;">++</div>
<div style="left:553.50px;top:733.00px;width:30px;text-align:center;font-family:'Liberation Sans', sans-serif;font-size:13px;line-height:17px;font-weight:bold;color:#000;white-space:pre;font-kerning:none;">&#8211;</div>
<div style="left:452px;top:725px;width:61px;height:26px;background:#fff;border:1px solid #7a7a7a"></div>
<div style="left:470.55px;top:727.30px;font-family:'Liberation Sans', sans-serif;font-size:13px;line-height:17px;font-weight:bold;color:#000;white-space:pre;font-kerning:none;letter-spacing:0.930px;">288</div>
<div style="left:346px;top:761px;width:86px;height:91px;background:#3a3a3a"></div>
<div style="left:346px;top:761px;width:86px;height:29px;background:#000"></div>
<div style="left:346px;top:792px;width:86px;height:29px;background:#000"></div>
<div style="left:346px;top:823px;width:86px;height:29px;background:#000"></div>
<div style="left:438px;top:761px;width:86px;height:91px;background:#3a3a3a"></div>
<div style="left:438px;top:761px;width:86px;height:29px;background:#000"></div>
<div style="left:438px;top:792px;width:86px;height:29px;background:#000"></div>
<div style="left:438px;top:823px;width:86px;height:29px;background:#000"></div>
<div style="left:531px;top:761px;width:86px;height:91px;background:#3a3a3a"></div>
<div style="left:531px;top:761px;width:86px;height:29px;background:#000"></div>
<div style="left:531px;top:792px;width:86px;height:29px;background:#000"></div>
<div style="left:531px;top:823px;width:86px;height:29px;background:#000"></div>
<div style="left:369.90px;top:768.50px;font-family:'Liberation Sans', sans-serif;font-size:13px;line-height:17px;font-weight:bold;color:#e8e84a;white-space:pre;font-kerning:none;letter-spacing:1.615px;">512</div>
<div style="left:358.35px;top:799.00px;font-family:'Liberation Sans', sans-serif;font-size:13px;line-height:17px;font-weight:bold;color:#5ae85a;white-space:pre;font-kerning:none;letter-spacing:0.751px;">235DC8</div>
<div style="left:358.35px;top:829.30px;font-family:'Liberation Sans', sans-serif;font-size:13px;line-height:17px;font-weight:bold;color:#ffffff;white-space:pre;font-kerning:none;letter-spacing:0.751px;">235DC8</div>
<div style="left:466.80px;top:768.50px;font-family:'Liberation Sans', sans-serif;font-size:13px;line-height:17px;font-weight:bold;color:#e8e84a;white-space:pre;font-kerning:none;letter-spacing:0.000px;">4</div>
<div style="left:489.68px;top:768.50px;font-family:'Liberation Sans', sans-serif;font-size:13px;line-height:17px;font-weight:bold;color:#e8e84a;white-space:pre;font-kerning:none;letter-spacing:0.000px;">%</div>
<div style="left:459.35px;top:799.00px;font-family:'Liberation Sans', sans-serif;font-size:13px;line-height:17px;font-weight:bold;color:#5ae85a;white-space:pre;font-kerning:none;letter-spacing:0.614px;">2C94</div>
<div style="left:460.55px;top:829.30px;font-family:'Liberation Sans', sans-serif;font-size:13px;line-height:17px;font-weight:bold;color:#ffffff;white-space:pre;font-kerning:none;letter-spacing:0.214px;">2A94</div>
<div style="left:574.18px;top:768.50px;font-family:'Liberation Sans', sans-serif;font-size:13px;line-height:17px;font-weight:bold;color:#e8e84a;white-space:pre;font-kerning:none;letter-spacing:0.000px;">1</div>
<div style="left:548.08px;top:799.00px;font-family:'Liberation Sans', sans-serif;font-size:13px;line-height:17px;font-weight:bold;color:#5ae85a;white-space:pre;font-kerning:none;letter-spacing:1.147px;">11412</div>
<div style="left:548.08px;top:829.30px;font-family:'Liberation Sans', sans-serif;font-size:13px;line-height:17px;font-weight:bold;color:#ffffff;white-space:pre;font-kerning:none;letter-spacing:1.151px;">10900</div>
<div style="left:32px;top:858px;width:30px;height:30px;background:#9999ff;border:1px solid #808080;border-top-color:#a0a0a0;border-left-color:#a0a0a0"></div>
<div style="left:40.59px;top:865.40px;font-family:'Liberation Sans', sans-serif;font-size:13px;line-height:17px;font-weight:bold;color:#000040;white-space:pre;font-kerning:none;letter-spacing:1.487px;">00</div>
<div style="left:68px;top:858px;width:30px;height:30px;background:#ffccff;border:1px solid #808080;border-top-color:#a0a0a0;border-left-color:#a0a0a0"></div>
<div style="left:75.73px;top:865.40px;font-family:'Liberation Sans', sans-serif;font-size:13px;line-height:17px;font-weight:bold;color:#000;white-space:pre;font-kerning:none;letter-spacing:0.364px;">FF</div>
<div style="left:103px;top:858px;width:30px;height:30px;background:#ccffff;border:1px solid #808080;border-top-color:#a0a0a0;border-left-color:#a0a0a0"></div>
<div style="left:111.46px;top:865.40px;font-family:'Liberation Sans', sans-serif;font-size:13px;line-height:17px;font-weight:bold;color:#000;white-space:pre;font-kerning:none;letter-spacing:0.589px;">==</div>
<div style="left:139px;top:858px;width:30px;height:30px;background:#c4c4c4;border:1px solid #808080;border-top-color:#a0a0a0;border-left-color:#a0a0a0"></div>
<div style="left:145.46px;top:865.40px;font-family:'Liberation Sans', sans-serif;font-size:13px;line-height:17px;font-weight:bold;color:#000;white-space:pre;font-kerning:none;letter-spacing:2.021px;">=P</div>
<div style="left:174px;top:858px;width:30px;height:30px;background:#c4c4c4;border:1px solid #808080;border-top-color:#a0a0a0;border-left-color:#a0a0a0"></div>
<div style="left:181.16px;top:865.40px;font-family:'Liberation Sans', sans-serif;font-size:13px;line-height:17px;font-weight:bold;color:#000;white-space:pre;font-kerning:none;letter-spacing:0.705px;">=D</div>
<div style="left:209.5px;top:858px;width:30px;height:30px;background:#ffffcc;border:1px solid #808080;border-top-color:#a0a0a0;border-left-color:#a0a0a0"></div>
<div style="left:222px;top:870.5px;width:2.2px;height:11px;background:#111"></div>
<div style="left:226.4px;top:870.5px;width:2.2px;height:11px;background:#111"></div>
<div style="left:245px;top:858px;width:30px;height:30px;background:#c4c4c4;border:1px solid #808080;border-top-color:#a0a0a0;border-left-color:#a0a0a0"></div>
<div style="left:255.63px;top:865.40px;font-family:'Liberation Sans', sans-serif;font-size:13px;line-height:17px;font-weight:bold;color:#000;white-space:pre;font-kerning:none;letter-spacing:0.000px;">R</div>
<div style="left:290px;top:858px;width:30px;height:30px;background:#c4c4c4;border:1px solid #808080;border-top-color:#a0a0a0;border-left-color:#a0a0a0"></div>
<div style="left:294.85px;top:865.40px;font-family:'Liberation Sans', sans-serif;font-size:13px;line-height:17px;font-weight:bold;color:#000;white-space:pre;font-kerning:none;letter-spacing:-0.016px;">Tab</div>
<div style="left:326px;top:858px;width:30px;height:30px;background:#c4c4c4;border:1px solid #808080;border-top-color:#a0a0a0;border-left-color:#a0a0a0"></div>
<div style="left:328.15px;top:864.48px;font-family:'Liberation Sans', sans-serif;font-size:14.2px;line-height:18px;font-weight:bold;color:#000;white-space:pre;font-kerning:none;letter-spacing:0.502px;">Hex</div>
<div style="left:362px;top:875px;width:11px;height:11px;background:#f0f0f0;border-top:2px solid #8a8a8a;border-left:2px solid #8a8a8a;border-right:1px solid #fff;border-bottom:1px solid #fff"></div>
<div style="left:378.00px;top:872.00px;font-family:'Liberation Sans', sans-serif;font-size:13px;line-height:17px;font-weight:bold;color:#a8a8a8;white-space:pre;font-kerning:none;">Sync</div>
<div style="left:456.0px;top:862px;width:11px;height:11px;background:#f0f0f0;border-top:2px solid #8a8a8a;border-left:2px solid #8a8a8a;border-right:1px solid #fff;border-bottom:1px solid #fff"></div>
<div style="left:471.4px;top:862px;width:11px;height:11px;background:#f0f0f0;border-top:2px solid #8a8a8a;border-left:2px solid #8a8a8a;border-right:1px solid #fff;border-bottom:1px solid #fff"></div>
<div style="left:486.8px;top:862px;width:11px;height:11px;background:#f0f0f0;border-top:2px solid #8a8a8a;border-left:2px solid #8a8a8a;border-right:1px solid #fff;border-bottom:1px solid #fff"></div>
<div style="left:502.2px;top:862px;width:11px;height:11px;background:#f0f0f0;border-top:2px solid #8a8a8a;border-left:2px solid #8a8a8a;border-right:1px solid #fff;border-bottom:1px solid #fff"></div>
<svg style="position:absolute;left:487px;top:862px" width="12" height="12"><path d="M2.5 6L5 8.5L9.5 3" stroke="#a0a0a0" stroke-width="1.5" fill="none"/></svg>
<div style="left:32px;top:898px;width:61px;height:30px;background:#c8c8c8;border:1px solid #8a8a8a;"></div>
<div style="left:38.68px;top:905.00px;font-family:'Liberation Sans', sans-serif;font-size:13px;line-height:17px;font-weight:bold;color:#a8a8a8;white-space:pre;font-kerning:none;letter-spacing:-0.071px;">Annulla</div>
<div style="left:113px;top:898px;width:122px;height:31px;background:#f0f0f0;border:1px solid #404040;box-shadow:inset -2px -2px #606060, inset 1px 1px #fff"></div>
<div style="left:128.74px;top:904.40px;font-family:'Liberation Sans', sans-serif;font-size:13px;line-height:17px;font-weight:bold;color:#000;white-space:pre;font-kerning:none;letter-spacing:0.405px;">modifica area</div>
<div style="left:250px;top:899px;width:76px;height:30px;background:#fff;border:1px solid #8a8a8a"></div>
<div style="left:267.15px;top:900.50px;font-family:'Liberation Sans', sans-serif;font-size:13px;line-height:17px;font-weight:bold;color:#000;white-space:pre;font-kerning:none;letter-spacing:0.983px;">20000</div>
<div style="left:326px;top:899px;width:30px;height:30px;background:#f0f0f0;border:1px solid #404040;box-shadow:inset -2px -2px #606060, inset 1px 1px #fff"></div>
<div style="left:339.6px;top:908.6px;width:2.4px;height:9.4px;background:#111"></div>
<div style="left:379.00px;top:897.00px;font-family:'Liberation Sans', sans-serif;font-size:13px;line-height:17px;font-weight:bold;color:#000;white-space:pre;font-kerning:none;">Mem</div>
<div style="left:379.00px;top:912.50px;font-family:'Liberation Sans', sans-serif;font-size:13px;line-height:17px;font-weight:bold;color:#000;white-space:pre;font-kerning:none;">Copie</div>
<div style="left:424px;top:900px;width:12px;height:12px;background:#f0f0f0;border-top:2px solid #8a8a8a;border-left:2px solid #8a8a8a;border-right:1px solid #fff;border-bottom:1px solid #fff"></div>
<div style="left:424px;top:915px;width:12px;height:12px;background:#f0f0f0;border-top:2px solid #8a8a8a;border-left:2px solid #8a8a8a;border-right:1px solid #fff;border-bottom:1px solid #fff"></div>
<div style="left:457px;top:878px;width:141px;height:56px;border:1px solid #8a8a8a;box-shadow:inset 1px 1px #fff"></div>
<div style="left:480.70px;top:883.32px;font-family:'Liberation Sans', sans-serif;font-size:13.5px;line-height:18px;font-weight:bold;color:#000;white-space:pre;font-kerning:none;letter-spacing:0.132px;">Dual project</div>
<div style="left:462px;top:903px;width:60px;height:26px;background:#f0f0f0;border:3px solid #6a6a6a;border-top:2px solid #8a8a8a;border-left:2px solid #8a8a8a"></div>
<div style="left:462.00px;top:908.00px;width:60px;text-align:center;font-family:'Liberation Sans', sans-serif;font-size:13px;line-height:17px;font-weight:bold;color:#a8a8a8;white-space:pre;font-kerning:none;">cerca</div>
<div style="left:533px;top:903px;width:60px;height:26px;background:#f0f0f0;border:3px solid #6a6a6a;border-top:2px solid #8a8a8a;border-left:2px solid #8a8a8a"></div>
<div style="left:533.00px;top:908.00px;width:60px;text-align:center;font-family:'Liberation Sans', sans-serif;font-size:13px;line-height:17px;font-weight:bold;color:#a8a8a8;white-space:pre;font-kerning:none;">copia</div>
<div style="left:22px;top:936px;width:52px;height:23px;background:#f8f8f8;border:1px solid #c8c8c8;border-right:2px solid #8a8a8a;border-bottom:1px solid #8a8a8a"></div>
<div style="left:29.00px;top:940.34px;font-family:'Liberation Sans', sans-serif;font-size:12px;line-height:16px;font-weight:normal;color:#222;white-space:pre;font-kerning:none;">Matrice</div>
<div style="left:22px;top:962px;width:951px;height:23px;background:#f0f0f0;border-top:1px solid #d8d8d8"></div>
<div style="left:22px;top:963px;width:101px;height:22px;border-left:1px solid #c8c8c8;border-top:1px solid #c8c8c8"></div>
<div style="left:23.22px;top:966.94px;font-family:'Liberation Sans', sans-serif;font-size:12px;line-height:16px;font-weight:normal;color:#111;white-space:pre;font-kerning:none;letter-spacing:-0.694px;">FGTec00002</div>
<div style="left:125px;top:963px;width:250px;height:22px;border-left:1px solid #c8c8c8;border-top:1px solid #c8c8c8"></div>
<div style="left:127.40px;top:966.94px;font-family:'Liberation Sans', sans-serif;font-size:12px;line-height:16px;font-weight:normal;color:#111;white-space:pre;font-kerning:none;letter-spacing:-0.811px;">GOLF_8_GTD_MD1CS004_2020_READ01.ORI_I...</div>
<div style="left:378px;top:963px;width:78px;height:22px;border-left:1px solid #c8c8c8;border-top:1px solid #c8c8c8"></div>
<div style="left:380.38px;top:966.94px;font-family:'Liberation Sans', sans-serif;font-size:12px;line-height:16px;font-weight:normal;color:#111;white-space:pre;font-kerning:none;letter-spacing:-1.346px;">7FFFFF</div>
<div style="left:459px;top:963px;width:252px;height:22px;border-left:1px solid #c8c8c8;border-top:1px solid #c8c8c8"></div>
<div style="left:461.40px;top:966.94px;font-family:'Liberation Sans', sans-serif;font-size:12px;line-height:16px;font-weight:normal;color:#111;white-space:pre;font-kerning:none;letter-spacing:-0.822px;">GOLF_8_GTD_MD1CS004_2020_READ01.MOD_I.</div>
<div style="left:711px;top:963px;width:81px;height:22px;border-left:1px solid #c8c8c8;border-top:1px solid #c8c8c8"></div>
<div style="left:713.58px;top:966.94px;font-family:'Liberation Sans', sans-serif;font-size:12px;line-height:16px;font-weight:normal;color:#111;white-space:pre;font-kerning:none;letter-spacing:-1.246px;">7FFFFF</div>
<div style="left:792px;top:963px;width:101px;height:22px;border-left:1px solid #c8c8c8;border-top:1px solid #c8c8c8"></div>
<div style="left:794.70px;top:966.94px;font-family:'Liberation Sans', sans-serif;font-size:12px;line-height:16px;font-weight:normal;color:#111;white-space:pre;font-kerning:none;letter-spacing:0.346px;">normale</div>
<div style="left:893px;top:963px;width:52px;height:22px;border-left:1px solid #c8c8c8;border-top:1px solid #c8c8c8"></div>
<div style="left:895.09px;top:966.94px;font-family:'Liberation Sans', sans-serif;font-size:12px;line-height:16px;font-weight:normal;color:#111;white-space:pre;font-kerning:none;letter-spacing:-0.304px;">15:16:40</div>
<div style="left:22px;top:985.5px;width:951px;height:9px;background:#235f78"></div>
<div style="left:0px;top:990px;width:2px;height:4px;background:#235f78"></div>
<svg style="position:absolute;left:958px;top:972px" width="15" height="13"><path d="M2 12.5L14 1.5M7 12.5L14 6.5" stroke="#9a9a9a" stroke-width="1"/></svg>
<svg style="position:absolute;left:461.6px;top:885px" width="14" height="14"><path d="M10.7 3.3A5.2 5.2 0 0 0 3.3 10.7" stroke="#6a6a6a" stroke-width="1.3" fill="none"/><path d="M3.3 10.7A5.2 5.2 0 0 0 10.7 3.3" stroke="#fff" stroke-width="1.1" fill="none"/><circle cx="7" cy="7" r="4.3" fill="#fff"/></svg>
<svg style="position:absolute;left:800.7px;top:361.5px" width="14" height="14"><path d="M10.7 3.3A5.2 5.2 0 0 0 3.3 10.7" stroke="#6a6a6a" stroke-width="1.3" fill="none"/><path d="M3.3 10.7A5.2 5.2 0 0 0 10.7 3.3" stroke="#fff" stroke-width="1.1" fill="none"/><circle cx="7" cy="7" r="4.3" fill="#fff"/></svg>
<div style="left:820.40px;top:360.22px;font-family:'Liberation Sans', sans-serif;font-size:13.8px;line-height:18px;font-weight:bold;color:#111;white-space:pre;font-kerning:none;">LSB</div>
<svg style="position:absolute;left:866.3px;top:361.5px" width="14" height="14"><path d="M10.7 3.3A5.2 5.2 0 0 0 3.3 10.7" stroke="#6a6a6a" stroke-width="1.3" fill="none"/><path d="M3.3 10.7A5.2 5.2 0 0 0 10.7 3.3" stroke="#fff" stroke-width="1.1" fill="none"/><circle cx="7" cy="7" r="4.3" fill="#fff"/><circle cx="7" cy="7" r="1.9" fill="#000"/></svg>
<div style="left:886.70px;top:360.22px;font-family:'Liberation Sans', sans-serif;font-size:13.8px;line-height:18px;font-weight:bold;color:#111;white-space:pre;font-kerning:none;">MSB</div>
<svg style="position:absolute;left:800.7px;top:391.8px" width="14" height="14"><path d="M10.7 3.3A5.2 5.2 0 0 0 3.3 10.7" stroke="#6a6a6a" stroke-width="1.3" fill="none"/><path d="M3.3 10.7A5.2 5.2 0 0 0 10.7 3.3" stroke="#fff" stroke-width="1.1" fill="none"/><circle cx="7" cy="7" r="4.3" fill="#fff"/></svg>
<div style="left:820.40px;top:390.52px;font-family:'Liberation Sans', sans-serif;font-size:13.8px;line-height:18px;font-weight:bold;color:#111;white-space:pre;font-kerning:none;">DEC</div>
<svg style="position:absolute;left:800.7px;top:412px" width="14" height="14"><path d="M10.7 3.3A5.2 5.2 0 0 0 3.3 10.7" stroke="#6a6a6a" stroke-width="1.3" fill="none"/><path d="M3.3 10.7A5.2 5.2 0 0 0 10.7 3.3" stroke="#fff" stroke-width="1.1" fill="none"/><circle cx="7" cy="7" r="4.3" fill="#fff"/></svg>
<div style="left:820.40px;top:410.72px;font-family:'Liberation Sans', sans-serif;font-size:13.8px;line-height:18px;font-weight:bold;color:#111;white-space:pre;font-kerning:none;">8</div>
<svg style="position:absolute;left:866.3px;top:412px" width="14" height="14"><path d="M10.7 3.3A5.2 5.2 0 0 0 3.3 10.7" stroke="#6a6a6a" stroke-width="1.3" fill="none"/><path d="M3.3 10.7A5.2 5.2 0 0 0 10.7 3.3" stroke="#fff" stroke-width="1.1" fill="none"/><circle cx="7" cy="7" r="4.3" fill="#fff"/></svg>
<div style="left:886.70px;top:410.72px;font-family:'Liberation Sans', sans-serif;font-size:13.8px;line-height:18px;font-weight:bold;color:#111;white-space:pre;font-kerning:none;">8+</div>
<svg style="position:absolute;left:800.7px;top:432.8px" width="14" height="14"><path d="M10.7 3.3A5.2 5.2 0 0 0 3.3 10.7" stroke="#6a6a6a" stroke-width="1.3" fill="none"/><path d="M3.3 10.7A5.2 5.2 0 0 0 10.7 3.3" stroke="#fff" stroke-width="1.1" fill="none"/><circle cx="7" cy="7" r="4.3" fill="#fff"/><circle cx="7" cy="7" r="1.9" fill="#000"/></svg>
<div style="left:820.40px;top:431.52px;font-family:'Liberation Sans', sans-serif;font-size:13.8px;line-height:18px;font-weight:bold;color:#111;white-space:pre;font-kerning:none;">16</div>
<svg style="position:absolute;left:866.3px;top:432.8px" width="14" height="14"><path d="M10.7 3.3A5.2 5.2 0 0 0 3.3 10.7" stroke="#6a6a6a" stroke-width="1.3" fill="none"/><path d="M3.3 10.7A5.2 5.2 0 0 0 10.7 3.3" stroke="#fff" stroke-width="1.1" fill="none"/><circle cx="7" cy="7" r="4.3" fill="#fff"/></svg>
<div style="left:886.70px;top:431.52px;font-family:'Liberation Sans', sans-serif;font-size:13.8px;line-height:18px;font-weight:bold;color:#111;white-space:pre;font-kerning:none;">16+</div>
<svg style="position:absolute;left:800.7px;top:453.4px" width="14" height="14"><path d="M10.7 3.3A5.2 5.2 0 0 0 3.3 10.7" stroke="#6a6a6a" stroke-width="1.3" fill="none"/><path d="M3.3 10.7A5.2 5.2 0 0 0 10.7 3.3" stroke="#fff" stroke-width="1.1" fill="none"/><circle cx="7" cy="7" r="4.3" fill="#fff"/></svg>
<div style="left:820.40px;top:452.12px;font-family:'Liberation Sans', sans-serif;font-size:13.8px;line-height:18px;font-weight:bold;color:#111;white-space:pre;font-kerning:none;">32</div>
<svg style="position:absolute;left:866.3px;top:453.4px" width="14" height="14"><path d="M10.7 3.3A5.2 5.2 0 0 0 3.3 10.7" stroke="#6a6a6a" stroke-width="1.3" fill="none"/><path d="M3.3 10.7A5.2 5.2 0 0 0 10.7 3.3" stroke="#fff" stroke-width="1.1" fill="none"/><circle cx="7" cy="7" r="4.3" fill="#fff"/></svg>
<div style="left:886.70px;top:452.12px;font-family:'Liberation Sans', sans-serif;font-size:13.8px;line-height:18px;font-weight:bold;color:#111;white-space:pre;font-kerning:none;">32+</div>
<svg style="position:absolute;left:801px;top:478.7px" width="14" height="14"><path d="M10.7 3.3A5.2 5.2 0 0 0 3.3 10.7" stroke="#6a6a6a" stroke-width="1.3" fill="none"/><path d="M3.3 10.7A5.2 5.2 0 0 0 10.7 3.3" stroke="#fff" stroke-width="1.1" fill="none"/><circle cx="7" cy="7" r="4.3" fill="#fff"/></svg>
<div style="left:820.70px;top:477.42px;font-family:'Liberation Sans', sans-serif;font-size:13.8px;line-height:18px;font-weight:bold;color:#111;white-space:pre;font-kerning:none;">32 F</div>
<svg style="position:absolute;left:801px;top:624.7px" width="14" height="14"><path d="M10.7 3.3A5.2 5.2 0 0 0 3.3 10.7" stroke="#6a6a6a" stroke-width="1.3" fill="none"/><path d="M3.3 10.7A5.2 5.2 0 0 0 10.7 3.3" stroke="#fff" stroke-width="1.1" fill="none"/><circle cx="7" cy="7" r="4.3" fill="#fff"/></svg>
<div style="left:820.20px;top:623.42px;font-family:'Liberation Sans', sans-serif;font-size:13.8px;line-height:18px;font-weight:bold;color:#111;white-space:pre;font-kerning:none;">LOW</div>
<div style="left:932px;top:361.0px;width:32px;height:31px;background:#f0f0f0;box-shadow:inset -2px -2px #8a8a8a, inset 1px 1px #fff"></div>
<div style="left:932px;top:391.3px;width:32px;height:31px;background:#f0f0f0;box-shadow:inset -2px -2px #8a8a8a, inset 1px 1px #fff"></div>
<div style="left:932px;top:421.6px;width:32px;height:31px;background:#f0f0f0;box-shadow:inset -2px -2px #8a8a8a, inset 1px 1px #fff"></div>
<svg style="position:absolute;left:932px;top:361px" width="32" height="92">
<path d="M4 26V9.5L6.5 7H11.5L13 9H19V14H9Z" fill="#ffff90" stroke="#444" stroke-width="0.6"/>
<path d="M4 26L9 14H27.5L21.5 26Z" fill="#8f8a10" stroke="#333" stroke-width="0.6"/>
<path d="M16 5.5C19 2 23 2.5 25 5" stroke="#333" stroke-width="1.2" fill="none"/><path d="M23 3.5L27 6.5L24 8.5Z" fill="#111"/>
<path d="M5.5 35.5H26.5V56.5H5.5Z" fill="#8f8a10" stroke="#333" stroke-width="0.6"/>
<rect x="9" y="36" width="13" height="10" fill="#efefef"/>
<rect x="9" y="49" width="15" height="7" fill="#111"/><rect x="20" y="50" width="3" height="5" fill="#fff"/>
<path d="M7.5 69.5H19.5V86.5H7.5Z" fill="#fff" stroke="#444" stroke-width="1"/>
<path d="M11 68L16 64H23L19 69" fill="#909090"/><rect x="23" y="63" width="2" height="4" fill="#1a1aa0"/>
<path d="M10 74H18M10 77H18M10 80H18M10 83H18" stroke="#333" stroke-width="1.2"/>
</svg>
<div style="left:796px;top:471px;width:177px;height:147px;border:1px solid #8a8a8a;border-right:none;box-shadow:inset 1px 1px #fff"></div>
<div style="left:802px;top:498px;width:18px;height:18px;background:#f0f0f0;border:1px solid #8a8a8a;box-shadow:inset 1px 1px #fff"></div>
<div style="left:801.00px;top:499.34px;width:20px;text-align:center;font-family:'Liberation Sans', sans-serif;font-size:12px;line-height:16px;font-weight:bold;color:#999;white-space:pre;font-kerning:none;">-</div>
<div style="left:948px;top:498px;width:19px;height:18px;background:#f0f0f0;border:1px solid #8a8a8a;box-shadow:inset 1px 1px #fff"></div>
<div style="left:947.50px;top:499.34px;width:20px;text-align:center;font-family:'Liberation Sans', sans-serif;font-size:12px;line-height:16px;font-weight:bold;color:#999;white-space:pre;font-kerning:none;">+</div>
<div style="left:836.54px;top:496.72px;font-family:'Liberation Sans', sans-serif;font-size:13.8px;line-height:18px;font-weight:bold;color:#a8a8a8;white-space:pre;font-kerning:none;letter-spacing:-0.086px;">ingrandimento</div>
<div style="left:801px;top:517px;width:167px;height:25px;border:1px solid #8a8a8a;border-top:2px solid #8a8a8a;border-left:2px solid #8a8a8a"></div>
<div style="left:921px;top:518px;width:2px;height:24px;background:#8a8a8a"></div>
<div style="left:936.72px;top:518.22px;font-family:'Liberation Sans', sans-serif;font-size:13.8px;line-height:18px;font-weight:bold;color:#6a6a6a;white-space:pre;font-kerning:none;letter-spacing:0.413px;">25</div>
<div style="left:811px;top:528px;width:100px;height:2px;background:#7a7a7a;box-shadow:0 1px #fff"></div>
<svg style="position:absolute;left:810px;top:519px" width="14" height="22"><path d="M1.5 1.5H12V15L7.5 20.5L2 15Z" fill="#f4f4f4" stroke="#fff"/><path d="M12 1V15.5L7.5 20.5" stroke="#8a8a8a" stroke-width="1.4" fill="none"/></svg>
<div style="left:811.79px;top:547.72px;font-family:'Liberation Sans', sans-serif;font-size:13.8px;line-height:18px;font-weight:bold;color:#a8a8a8;white-space:pre;font-kerning:none;letter-spacing:-0.121px;">moltiplica</div>
<div style="left:921.04px;top:547.72px;font-family:'Liberation Sans', sans-serif;font-size:13.8px;line-height:18px;font-weight:bold;color:#a8a8a8;white-space:pre;font-kerning:none;letter-spacing:-0.210px;">unità</div>
<div style="left:801px;top:568px;width:89px;height:23px;background:#f0f0f0;border:2px solid #7a7a7a;border-bottom:1px solid #e0e0e0;border-right:1px solid #e0e0e0"></div>
<div style="left:872px;top:570px;width:17px;height:20px;background:#f0f0f0;border-right:2px solid #7a7a7a;border-bottom:2px solid #7a7a7a;box-shadow:inset 1px 1px #fff"></div>
<div style="left:877px;top:577px;width:0;height:0;border-left:4px solid transparent;border-right:4px solid transparent;border-top:4px solid #888"></div>
<div style="left:806.00px;top:572.00px;font-family:'Liberation Sans', sans-serif;font-size:13px;line-height:17px;font-weight:normal;color:#333;white-space:pre;font-kerning:none;">1</div>
<div style="left:907px;top:568px;width:59px;height:23px;background:#f0f0f0;border:2px solid #7a7a7a;border-bottom:1px solid #e0e0e0;border-right:1px solid #e0e0e0"></div>
<div style="left:948px;top:570px;width:17px;height:20px;background:#f0f0f0;border-right:2px solid #7a7a7a;border-bottom:2px solid #7a7a7a;box-shadow:inset 1px 1px #fff"></div>
<div style="left:953px;top:577px;width:0;height:0;border-left:4px solid transparent;border-right:4px solid transparent;border-top:4px solid #888"></div>
<div style="left:912.00px;top:572.00px;font-family:'Liberation Sans', sans-serif;font-size:13px;line-height:17px;font-weight:normal;color:#333;white-space:pre;font-kerning:none;">1</div>
<div style="left:801.5px;top:600px;width:11.5px;height:12px;border-top:2px solid #7a7a7a;border-left:2px solid #7a7a7a;border-right:1px solid #fff;border-bottom:1px solid #fff"></div>
<div style="left:827.64px;top:596.72px;font-family:'Liberation Sans', sans-serif;font-size:13.8px;line-height:18px;font-weight:bold;color:#a8a8a8;white-space:pre;font-kerning:none;letter-spacing:-0.095px;">ingr. auto</div>
<div style="left:877px;top:634px;width:43px;height:2px;background:#c0c0c0"></div>
<div style="left:940px;top:634px;width:20px;height:2px;background:#c0c0c0"></div>
<div style="left:970px;top:640px;width:3px;height:8px;background:#333"></div>
<div style="left:970px;top:655px;width:3px;height:8px;background:#333"></div>
<div style="left:970px;top:669px;width:3px;height:11px;background:#333"></div>
<div style="left:970px;top:705px;width:3px;height:9px;background:#333"></div>
<div style="left:970px;top:718px;width:3px;height:10px;background:#333"></div>
<div style="left:970px;top:737px;width:3px;height:11px;background:#333"></div>
<div style="left:617px;top:635px;width:351px;height:326px;background:#f0f0f0;border:1px solid #c4c4c4;border-radius:8px;box-shadow:0 2px 9px rgba(0,0,0,0.22)"></div>
<div style="left:618px;top:636px;width:349px;height:29px;background:#f3f3f3;border-top-left-radius:7px;border-top-right-radius:7px"></div>
<svg style="position:absolute;left:620px;top:636px" width="22" height="22" viewBox="0 0 22 22">
<rect x="4.5" y="3.5" width="17" height="18" fill="#fbfbfb"/>
<path d="M6 6.6L6.7 5.2L7.5 6.6L8.3 5.2L9 6.6M10.2 5V6.8M11.4 6.8V5.3H13V6.8" stroke="#111" stroke-width="1.6" fill="none"/>
<path d="M12.6 10V8.4H14.6V10M15.2 8.4H17.2V10M17.8 10.6V8.4H19.8L20 9.6H18.6" stroke="#222" stroke-width="1.3" fill="none"/>
<path d="M6.2 20.2L9.6 11.6L11.6 11.4M7.6 15.4H10.2" stroke="#c43a3a" stroke-width="2.4" fill="none"/>
<path d="M15.7 14.3A3.1 3.1 0 1 0 16.8 16.9H14.4" fill="#b8e6fa" stroke="#2c6aa8" stroke-width="2.2"/>
</svg>
<div style="left:645.37px;top:641.97px;font-family:'Liberation Sans', sans-serif;font-size:12.5px;line-height:16px;font-weight:normal;color:#a0a0a0;white-space:pre;font-kerning:none;letter-spacing:-0.213px;">Modifica area selezionata</div>
<svg style="position:absolute;left:947px;top:643px" width="12" height="12"><path d="M0.5 0.5L11.5 11.5M11.5 0.5L0.5 11.5" stroke="#909090" stroke-width="1.1"/></svg>
<div style="left:622.96px;top:676.52px;font-family:'Liberation Sans', sans-serif;font-size:11.5px;line-height:15px;font-weight:normal;color:#222;white-space:pre;font-kerning:none;letter-spacing:-0.352px;">variazione</div>
<div style="left:690px;top:677px;width:68px;height:19px;background:#f0f0f0;border:2px solid #8a8a8a;border-right:1px solid #fff;border-bottom:1px solid #fff"></div>
<div style="left:696.00px;top:679.22px;font-family:'Liberation Sans', sans-serif;font-size:11.5px;line-height:15px;font-weight:normal;color:#909090;white-space:pre;font-kerning:none;">10</div>
<svg style="position:absolute;left:622.3px;top:708.6px" width="14" height="14"><path d="M10.7 3.3A5.2 5.2 0 0 0 3.3 10.7" stroke="#6a6a6a" stroke-width="1.3" fill="none"/><path d="M3.3 10.7A5.2 5.2 0 0 0 10.7 3.3" stroke="#fff" stroke-width="1.1" fill="none"/><circle cx="7" cy="7" r="4.3" fill="#fff"/></svg>
<div style="left:640.96px;top:709.52px;font-family:'Liberation Sans', sans-serif;font-size:11.5px;line-height:15px;font-weight:normal;color:#222;white-space:pre;font-kerning:none;letter-spacing:-0.140px;">v.assoluto</div>
<svg style="position:absolute;left:622.3px;top:728.5px" width="14" height="14"><path d="M10.7 3.3A5.2 5.2 0 0 0 3.3 10.7" stroke="#6a6a6a" stroke-width="1.3" fill="none"/><path d="M3.3 10.7A5.2 5.2 0 0 0 10.7 3.3" stroke="#fff" stroke-width="1.1" fill="none"/><circle cx="7" cy="7" r="4.3" fill="#fff"/><circle cx="7" cy="7" r="1.9" fill="#000"/></svg>
<div style="left:640.96px;top:729.72px;font-family:'Liberation Sans', sans-serif;font-size:11.5px;line-height:15px;font-weight:normal;color:#222;white-space:pre;font-kerning:none;letter-spacing:-0.108px;">v.percentuale</div>
<div style="left:808px;top:677px;width:76px;height:23px;background:#f0f0f0;box-shadow:inset -1px -1px #a0a0a0, inset 1px 1px #fff;border-right:1px solid #6a6a6a;border-bottom:1px solid #6a6a6a"></div>
<div style="left:816.94px;top:680.62px;font-family:'Liberation Sans', sans-serif;font-size:11.5px;line-height:15px;font-weight:normal;color:#a8a8a8;white-space:pre;font-kerning:none;letter-spacing:-0.141px;">Incrementa</div>
<div style="left:808px;top:708px;width:76px;height:24px;background:#f0f0f0;box-shadow:inset -1px -1px #a0a0a0, inset 1px 1px #fff;border-right:1px solid #6a6a6a;border-bottom:1px solid #6a6a6a"></div>
<div style="left:815.06px;top:711.92px;font-family:'Liberation Sans', sans-serif;font-size:11.5px;line-height:15px;font-weight:normal;color:#a8a8a8;white-space:pre;font-kerning:none;letter-spacing:-0.433px;">Decrementa</div>
<div style="left:917px;top:677px;width:40px;height:23px;background:#f0f0f0;box-shadow:inset -1px -1px #a0a0a0, inset 1px 1px #fff;border-right:1px solid #6a6a6a;border-bottom:1px solid #6a6a6a"></div>
<div style="left:928.72px;top:681.02px;font-family:'Liberation Sans', sans-serif;font-size:11.5px;line-height:15px;font-weight:bold;color:#111;white-space:pre;font-kerning:none;letter-spacing:2.117px;">==</div>
<div style="left:917px;top:703px;width:40px;height:22px;background:#f0f0f0;box-shadow:inset -1px -1px #a0a0a0, inset 1px 1px #fff;border-right:1px solid #6a6a6a;border-bottom:1px solid #6a6a6a"></div>
<div style="left:929.25px;top:706.02px;font-family:'Liberation Sans', sans-serif;font-size:11.5px;line-height:15px;font-weight:bold;color:#111;white-space:pre;font-kerning:none;letter-spacing:0.435px;">00</div>
<div style="left:917px;top:727px;width:40px;height:23px;background:#f0f0f0;box-shadow:inset -1px -1px #a0a0a0, inset 1px 1px #fff;border-right:1px solid #6a6a6a;border-bottom:1px solid #6a6a6a"></div>
<div style="left:928.83px;top:730.32px;font-family:'Liberation Sans', sans-serif;font-size:11.5px;line-height:15px;font-weight:bold;color:#111;white-space:pre;font-kerning:none;letter-spacing:-1.059px;">FF</div>
<div style="left:917px;top:752px;width:40px;height:23px;background:#f0f0f0;box-shadow:inset -1px -1px #a0a0a0, inset 1px 1px #fff;border-right:1px solid #6a6a6a;border-bottom:1px solid #6a6a6a"></div>
<div style="left:925.76px;top:755.92px;font-family:'Liberation Sans', sans-serif;font-size:11.5px;line-height:15px;font-weight:normal;color:#a8a8a8;white-space:pre;font-kerning:none;letter-spacing:-1.530px;">HEX</div>
<div style="left:874px;top:752px;width:38px;height:22px;background:#f0f0f0;border:2px solid #8a8a8a;border-right:1px solid #fff;border-bottom:1px solid #fff"></div>
<div style="left:880.00px;top:755.72px;font-family:'Liberation Sans', sans-serif;font-size:11.5px;line-height:15px;font-weight:normal;color:#909090;white-space:pre;font-kerning:none;">0</div>
<div style="left:623px;top:797px;width:13px;height:12px;background:#fff;border:1px solid #8a8a8a;border-right:1px solid #fff;border-bottom:1px solid #fff"></div>
<svg style="position:absolute;left:623px;top:797px" width="13" height="12"><path d="M3 5.5L5.5 8.5L10 2.5" stroke="#000" stroke-width="1.8" fill="none"/></svg>
<div style="left:640.96px;top:795.32px;font-family:'Liberation Sans', sans-serif;font-size:11.5px;line-height:15px;font-weight:normal;color:#222;white-space:pre;font-kerning:none;letter-spacing:-0.149px;">valori interpolati</div>
<div style="left:834px;top:795px;width:76px;height:23px;background:#f0f0f0;box-shadow:inset -1px -1px #a0a0a0, inset 1px 1px #fff;border-right:1px solid #6a6a6a;border-bottom:1px solid #6a6a6a"></div>
<div style="left:854.28px;top:798.32px;font-family:'Liberation Sans', sans-serif;font-size:11.5px;line-height:15px;font-weight:normal;color:#111;white-space:pre;font-kerning:none;letter-spacing:-0.633px;">Applica</div>
<div style="left:622.29px;top:830.52px;font-family:'Liberation Sans', sans-serif;font-size:11.5px;line-height:15px;font-weight:normal;color:#222;white-space:pre;font-kerning:none;letter-spacing:0.295px;">(5,1)</div>
<div style="left:656px;top:827px;width:60px;height:20px;background:#fff;border:2px solid #8a8a8a;border-right:1px solid #fff;border-bottom:1px solid #fff"></div>
<div style="left:662.00px;top:829.72px;font-family:'Liberation Sans', sans-serif;font-size:11.5px;line-height:15px;font-weight:normal;color:#111;white-space:pre;font-kerning:none;">0</div>
<div style="left:725.49px;top:831.52px;font-family:'Liberation Sans', sans-serif;font-size:11.5px;line-height:15px;font-weight:normal;color:#222;white-space:pre;font-kerning:none;letter-spacing:0.195px;">(5,12</div>
<div style="left:760px;top:827px;width:59px;height:19px;background:#fff;border:2px solid #8a8a8a;border-right:1px solid #fff;border-bottom:1px solid #fff"></div>
<div style="left:766.00px;top:829.22px;font-family:'Liberation Sans', sans-serif;font-size:11.5px;line-height:15px;font-weight:normal;color:#111;white-space:pre;font-kerning:none;">0</div>
<div style="left:622.29px;top:862.82px;font-family:'Liberation Sans', sans-serif;font-size:11.5px;line-height:15px;font-weight:normal;color:#222;white-space:pre;font-kerning:none;letter-spacing:0.295px;">(9,1)</div>
<div style="left:656px;top:861px;width:60px;height:19px;background:#fff;border:2px solid #8a8a8a;border-right:1px solid #fff;border-bottom:1px solid #fff"></div>
<div style="left:662.00px;top:863.22px;font-family:'Liberation Sans', sans-serif;font-size:11.5px;line-height:15px;font-weight:normal;color:#111;white-space:pre;font-kerning:none;">0</div>
<div style="left:725.49px;top:865.82px;font-family:'Liberation Sans', sans-serif;font-size:11.5px;line-height:15px;font-weight:normal;color:#222;white-space:pre;font-kerning:none;letter-spacing:0.195px;">(9,12</div>
<div style="left:760px;top:862px;width:59px;height:18px;background:#fff;border:2px solid #8a8a8a;border-right:1px solid #fff;border-bottom:1px solid #fff"></div>
<div style="left:766.00px;top:863.72px;font-family:'Liberation Sans', sans-serif;font-size:11.5px;line-height:15px;font-weight:normal;color:#111;white-space:pre;font-kerning:none;">0</div>
<svg style="position:absolute;left:834px;top:831.4px" width="14" height="14"><path d="M10.7 3.3A5.2 5.2 0 0 0 3.3 10.7" stroke="#6a6a6a" stroke-width="1.3" fill="none"/><path d="M3.3 10.7A5.2 5.2 0 0 0 10.7 3.3" stroke="#fff" stroke-width="1.1" fill="none"/><circle cx="7" cy="7" r="4.3" fill="#fff"/></svg>
<div style="left:851.23px;top:831.52px;font-family:'Liberation Sans', sans-serif;font-size:11.5px;line-height:15px;font-weight:normal;color:#222;white-space:pre;font-kerning:none;letter-spacing:-0.324px;">incrementa</div>
<svg style="position:absolute;left:834px;top:851px" width="14" height="14"><path d="M10.7 3.3A5.2 5.2 0 0 0 3.3 10.7" stroke="#6a6a6a" stroke-width="1.3" fill="none"/><path d="M3.3 10.7A5.2 5.2 0 0 0 10.7 3.3" stroke="#fff" stroke-width="1.1" fill="none"/><circle cx="7" cy="7" r="4.3" fill="#fff"/></svg>
<div style="left:851.52px;top:851.02px;font-family:'Liberation Sans', sans-serif;font-size:11.5px;line-height:15px;font-weight:normal;color:#222;white-space:pre;font-kerning:none;letter-spacing:-0.327px;">decrementa</div>
<svg style="position:absolute;left:834px;top:871.6px" width="14" height="14"><path d="M10.7 3.3A5.2 5.2 0 0 0 3.3 10.7" stroke="#6a6a6a" stroke-width="1.3" fill="none"/><path d="M3.3 10.7A5.2 5.2 0 0 0 10.7 3.3" stroke="#fff" stroke-width="1.1" fill="none"/><circle cx="7" cy="7" r="4.3" fill="#fff"/></svg>
<div style="left:851.68px;top:871.02px;font-family:'Liberation Sans', sans-serif;font-size:11.5px;line-height:15px;font-weight:normal;color:#222;white-space:pre;font-kerning:none;letter-spacing:-0.147px;">sovrascrivi valori</div>
<div style="left:881px;top:927px;width:76px;height:23px;background:#f0f0f0;box-shadow:inset -1px -1px #a0a0a0, inset 1px 1px #fff;border-right:1px solid #6a6a6a;border-bottom:1px solid #6a6a6a"></div>
<div style="left:903.02px;top:930.12px;font-family:'Liberation Sans', sans-serif;font-size:11.5px;line-height:15px;font-weight:normal;color:#111;white-space:pre;font-kerning:none;letter-spacing:-0.289px;">Chiudi</div>
</body></html>
